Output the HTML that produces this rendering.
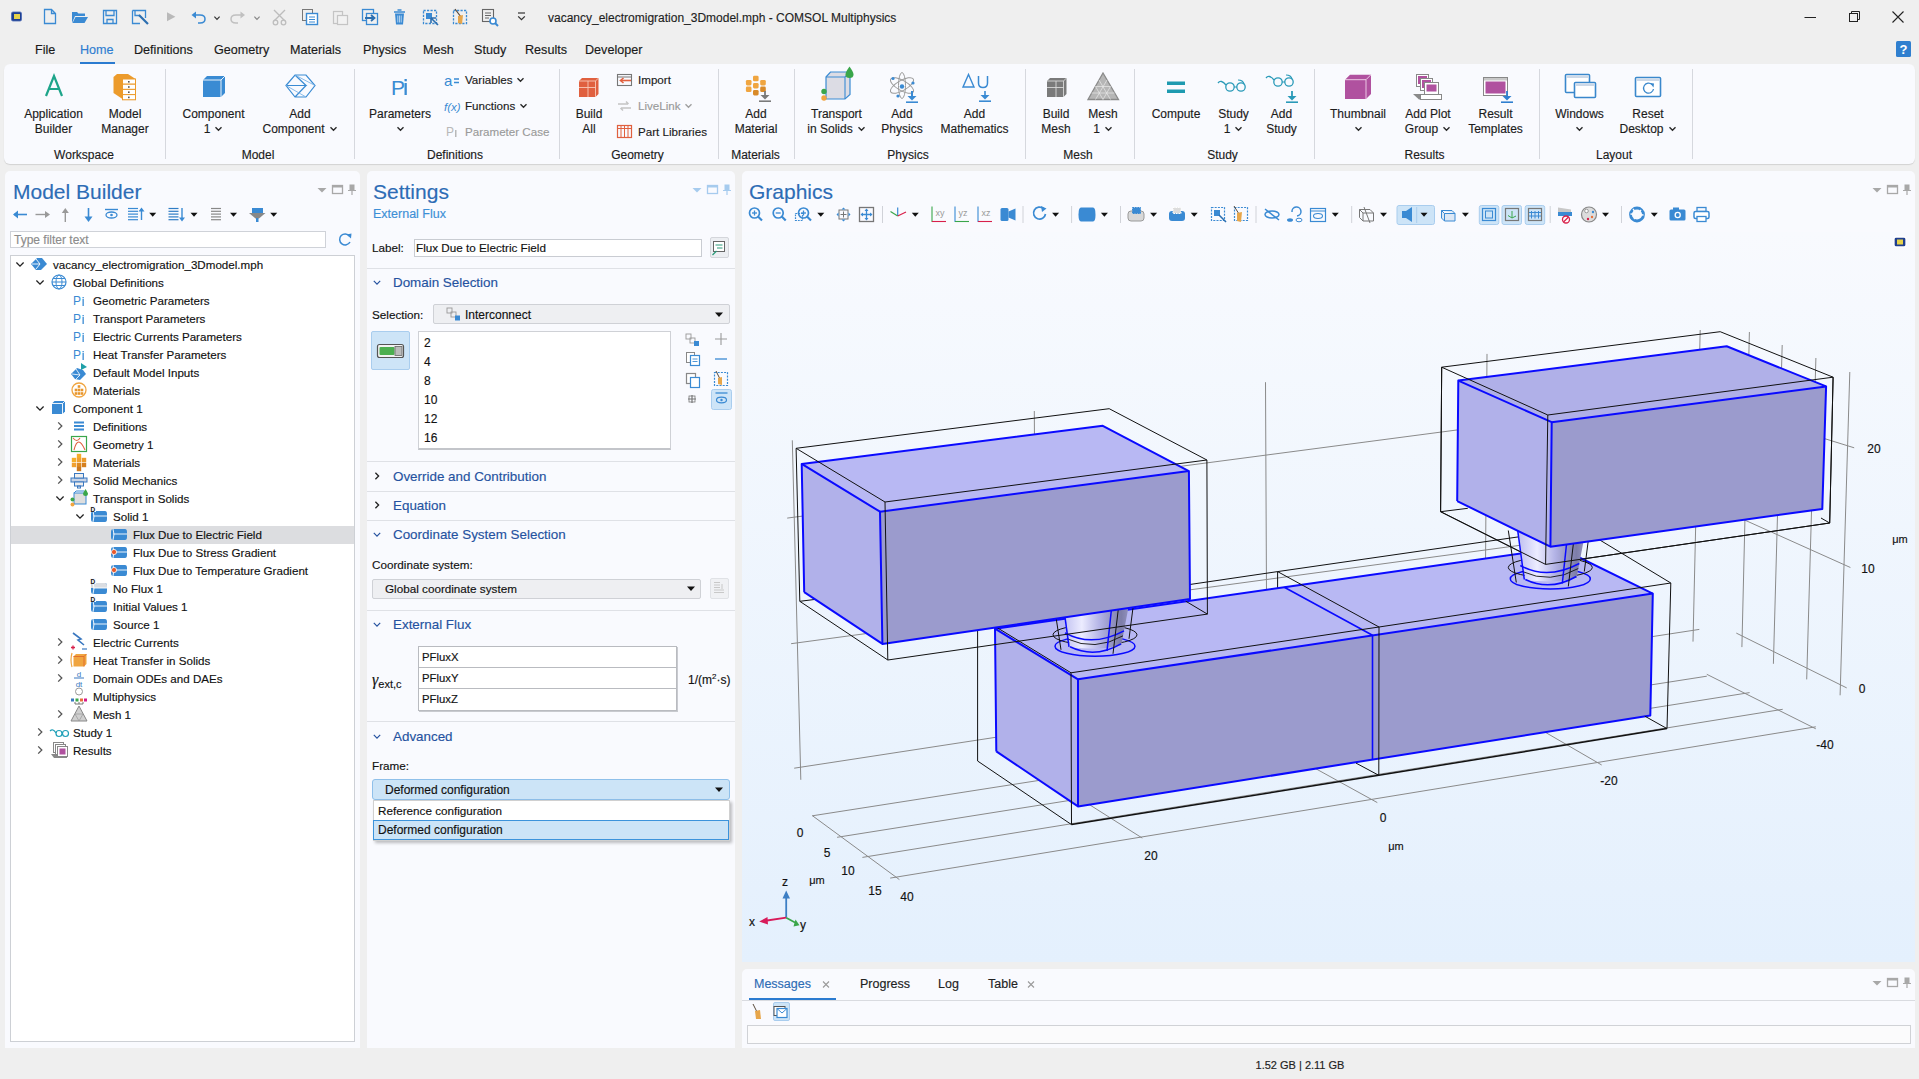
<!DOCTYPE html>
<html><head><meta charset="utf-8"><style>
html,body{margin:0;padding:0;}
body{width:1919px;height:1079px;overflow:hidden;background:#efefef;position:relative;font-family:"Liberation Sans",sans-serif;}
.t{position:absolute;white-space:nowrap;line-height:normal;-webkit-text-stroke:0.15px currentColor;}
svg{overflow:visible;}
</style></head><body>
<div style="position:absolute;left:4px;top:64px;width:1911px;height:100px;background:#f9fafe;border-radius:6px;box-shadow:0 1px 1px rgba(0,0,0,0.12);"></div>
<div style="position:absolute;left:5px;top:171px;width:355px;height:877px;background:#f9fafe;border-radius:5px 5px 0 0;"></div>
<div style="position:absolute;left:367px;top:171px;width:368px;height:877px;background:#f9fafe;border-radius:5px 5px 0 0;"></div>
<div style="position:absolute;left:742px;top:171px;width:1173px;height:791px;background:#f9fafe;border-radius:5px 5px 0 0;"></div>
<div style="position:absolute;left:742px;top:969px;width:1173px;height:79px;background:#f9fafe;border-radius:5px 5px 0 0;"></div>
<div class="t " style="left:548.0px;top:10.6px;font-size:12px;color:#1f1f1f;">vacancy_electromigration_3Dmodel.mph - COMSOL Multiphysics</div>
<div class="t " style="left:35.0px;top:42.6px;font-size:12.6px;color:#1a1a1a;">File</div>
<div class="t " style="left:80.0px;top:42.6px;font-size:12.6px;color:#2e7dd1;">Home</div>
<div class="t " style="left:134.0px;top:42.6px;font-size:12.6px;color:#1a1a1a;">Definitions</div>
<div class="t " style="left:214.0px;top:42.6px;font-size:12.6px;color:#1a1a1a;">Geometry</div>
<div class="t " style="left:290.0px;top:42.6px;font-size:12.6px;color:#1a1a1a;">Materials</div>
<div class="t " style="left:363.0px;top:42.6px;font-size:12.6px;color:#1a1a1a;">Physics</div>
<div class="t " style="left:423.0px;top:42.6px;font-size:12.6px;color:#1a1a1a;">Mesh</div>
<div class="t " style="left:474.0px;top:42.6px;font-size:12.6px;color:#1a1a1a;">Study</div>
<div class="t " style="left:525.0px;top:42.6px;font-size:12.6px;color:#1a1a1a;">Results</div>
<div class="t " style="left:585.0px;top:42.6px;font-size:12.6px;color:#1a1a1a;">Developer</div>
<div style="position:absolute;left:80px;top:62px;width:35px;height:2px;background:#2b7bd0;"></div>
<div class="t" style="left:-26.5px;top:106.6px;width:160px;text-align:center;font-size:12px;color:#1c1c1c;">Application</div>
<div class="t" style="left:-26.5px;top:121.6px;width:160px;text-align:center;font-size:12px;color:#1c1c1c;">Builder</div>
<div class="t" style="left:45.0px;top:106.6px;width:160px;text-align:center;font-size:12px;color:#1c1c1c;">Model</div>
<div class="t" style="left:45.0px;top:121.6px;width:160px;text-align:center;font-size:12px;color:#1c1c1c;">Manager</div>
<div class="t" style="left:133.5px;top:106.6px;width:160px;text-align:center;font-size:12px;color:#1c1c1c;">Component</div>
<div class="t" style="left:133.5px;top:121.6px;width:160px;text-align:center;font-size:12px;color:#1c1c1c;">1<svg width="9" height="6" style="margin-left:4px;vertical-align:1px;overflow:visible"><path d="M1.5 1.2 L4.5 4.2 L7.5 1.2" stroke="#2a2a2a" fill="none" stroke-width="1.4"/></svg></div>
<div class="t" style="left:220.0px;top:106.6px;width:160px;text-align:center;font-size:12px;color:#1c1c1c;">Add</div>
<div class="t" style="left:220.0px;top:121.6px;width:160px;text-align:center;font-size:12px;color:#1c1c1c;">Component<svg width="9" height="6" style="margin-left:4px;vertical-align:1px;overflow:visible"><path d="M1.5 1.2 L4.5 4.2 L7.5 1.2" stroke="#2a2a2a" fill="none" stroke-width="1.4"/></svg></div>
<div class="t" style="left:320.0px;top:106.6px;width:160px;text-align:center;font-size:12px;color:#1c1c1c;">Parameters</div>
<div class="t" style="left:320.0px;top:121.6px;width:160px;text-align:center;font-size:12px;color:#1c1c1c;"><svg width="9" height="6" style="margin-left:0;vertical-align:1px;overflow:visible"><path d="M1.5 1.2 L4.5 4.2 L7.5 1.2" stroke="#2a2a2a" fill="none" stroke-width="1.4"/></svg></div>
<div class="t" style="left:509.0px;top:106.6px;width:160px;text-align:center;font-size:12px;color:#1c1c1c;">Build</div>
<div class="t" style="left:509.0px;top:121.6px;width:160px;text-align:center;font-size:12px;color:#1c1c1c;">All</div>
<div class="t" style="left:676.0px;top:106.6px;width:160px;text-align:center;font-size:12px;color:#1c1c1c;">Add</div>
<div class="t" style="left:676.0px;top:121.6px;width:160px;text-align:center;font-size:12px;color:#1c1c1c;">Material</div>
<div class="t" style="left:756.5px;top:106.6px;width:160px;text-align:center;font-size:12px;color:#1c1c1c;">Transport</div>
<div class="t" style="left:756.5px;top:121.6px;width:160px;text-align:center;font-size:12px;color:#1c1c1c;">in Solids<svg width="9" height="6" style="margin-left:4px;vertical-align:1px;overflow:visible"><path d="M1.5 1.2 L4.5 4.2 L7.5 1.2" stroke="#2a2a2a" fill="none" stroke-width="1.4"/></svg></div>
<div class="t" style="left:822.0px;top:106.6px;width:160px;text-align:center;font-size:12px;color:#1c1c1c;">Add</div>
<div class="t" style="left:822.0px;top:121.6px;width:160px;text-align:center;font-size:12px;color:#1c1c1c;">Physics</div>
<div class="t" style="left:894.5px;top:106.6px;width:160px;text-align:center;font-size:12px;color:#1c1c1c;">Add</div>
<div class="t" style="left:894.5px;top:121.6px;width:160px;text-align:center;font-size:12px;color:#1c1c1c;">Mathematics</div>
<div class="t" style="left:976.0px;top:106.6px;width:160px;text-align:center;font-size:12px;color:#1c1c1c;">Build</div>
<div class="t" style="left:976.0px;top:121.6px;width:160px;text-align:center;font-size:12px;color:#1c1c1c;">Mesh</div>
<div class="t" style="left:1023.0px;top:106.6px;width:160px;text-align:center;font-size:12px;color:#1c1c1c;">Mesh</div>
<div class="t" style="left:1023.0px;top:121.6px;width:160px;text-align:center;font-size:12px;color:#1c1c1c;">1<svg width="9" height="6" style="margin-left:4px;vertical-align:1px;overflow:visible"><path d="M1.5 1.2 L4.5 4.2 L7.5 1.2" stroke="#2a2a2a" fill="none" stroke-width="1.4"/></svg></div>
<div class="t" style="left:1096.0px;top:106.6px;width:160px;text-align:center;font-size:12px;color:#1c1c1c;">Compute</div>
<div class="t" style="left:1153.5px;top:106.6px;width:160px;text-align:center;font-size:12px;color:#1c1c1c;">Study</div>
<div class="t" style="left:1153.5px;top:121.6px;width:160px;text-align:center;font-size:12px;color:#1c1c1c;">1<svg width="9" height="6" style="margin-left:4px;vertical-align:1px;overflow:visible"><path d="M1.5 1.2 L4.5 4.2 L7.5 1.2" stroke="#2a2a2a" fill="none" stroke-width="1.4"/></svg></div>
<div class="t" style="left:1201.5px;top:106.6px;width:160px;text-align:center;font-size:12px;color:#1c1c1c;">Add</div>
<div class="t" style="left:1201.5px;top:121.6px;width:160px;text-align:center;font-size:12px;color:#1c1c1c;">Study</div>
<div class="t" style="left:1278.0px;top:106.6px;width:160px;text-align:center;font-size:12px;color:#1c1c1c;">Thumbnail</div>
<div class="t" style="left:1278.0px;top:121.6px;width:160px;text-align:center;font-size:12px;color:#1c1c1c;"><svg width="9" height="6" style="margin-left:0;vertical-align:1px;overflow:visible"><path d="M1.5 1.2 L4.5 4.2 L7.5 1.2" stroke="#2a2a2a" fill="none" stroke-width="1.4"/></svg></div>
<div class="t" style="left:1348.0px;top:106.6px;width:160px;text-align:center;font-size:12px;color:#1c1c1c;">Add Plot</div>
<div class="t" style="left:1348.0px;top:121.6px;width:160px;text-align:center;font-size:12px;color:#1c1c1c;">Group<svg width="9" height="6" style="margin-left:4px;vertical-align:1px;overflow:visible"><path d="M1.5 1.2 L4.5 4.2 L7.5 1.2" stroke="#2a2a2a" fill="none" stroke-width="1.4"/></svg></div>
<div class="t" style="left:1415.5px;top:106.6px;width:160px;text-align:center;font-size:12px;color:#1c1c1c;">Result</div>
<div class="t" style="left:1415.5px;top:121.6px;width:160px;text-align:center;font-size:12px;color:#1c1c1c;">Templates</div>
<div class="t" style="left:1499.5px;top:106.6px;width:160px;text-align:center;font-size:12px;color:#1c1c1c;">Windows</div>
<div class="t" style="left:1499.5px;top:121.6px;width:160px;text-align:center;font-size:12px;color:#1c1c1c;"><svg width="9" height="6" style="margin-left:0;vertical-align:1px;overflow:visible"><path d="M1.5 1.2 L4.5 4.2 L7.5 1.2" stroke="#2a2a2a" fill="none" stroke-width="1.4"/></svg></div>
<div class="t" style="left:1568.0px;top:106.6px;width:160px;text-align:center;font-size:12px;color:#1c1c1c;">Reset</div>
<div class="t" style="left:1568.0px;top:121.6px;width:160px;text-align:center;font-size:12px;color:#1c1c1c;">Desktop<svg width="9" height="6" style="margin-left:4px;vertical-align:1px;overflow:visible"><path d="M1.5 1.2 L4.5 4.2 L7.5 1.2" stroke="#2a2a2a" fill="none" stroke-width="1.4"/></svg></div>
<div class="t" style="left:4.0px;top:147.6px;width:160px;text-align:center;font-size:12px;color:#1c1c1c;">Workspace</div>
<div class="t" style="left:178.0px;top:147.6px;width:160px;text-align:center;font-size:12px;color:#1c1c1c;">Model</div>
<div class="t" style="left:375.0px;top:147.6px;width:160px;text-align:center;font-size:12px;color:#1c1c1c;">Definitions</div>
<div class="t" style="left:557.5px;top:147.6px;width:160px;text-align:center;font-size:12px;color:#1c1c1c;">Geometry</div>
<div class="t" style="left:675.5px;top:147.6px;width:160px;text-align:center;font-size:12px;color:#1c1c1c;">Materials</div>
<div class="t" style="left:828.0px;top:147.6px;width:160px;text-align:center;font-size:12px;color:#1c1c1c;">Physics</div>
<div class="t" style="left:998.0px;top:147.6px;width:160px;text-align:center;font-size:12px;color:#1c1c1c;">Mesh</div>
<div class="t" style="left:1142.5px;top:147.6px;width:160px;text-align:center;font-size:12px;color:#1c1c1c;">Study</div>
<div class="t" style="left:1344.5px;top:147.6px;width:160px;text-align:center;font-size:12px;color:#1c1c1c;">Results</div>
<div class="t" style="left:1534.0px;top:147.6px;width:160px;text-align:center;font-size:12px;color:#1c1c1c;">Layout</div>
<div style="position:absolute;left:165px;top:69px;width:1px;height:90px;background:#d6d8de;"></div>
<div style="position:absolute;left:354px;top:69px;width:1px;height:90px;background:#d6d8de;"></div>
<div style="position:absolute;left:559px;top:69px;width:1px;height:90px;background:#d6d8de;"></div>
<div style="position:absolute;left:718px;top:69px;width:1px;height:90px;background:#d6d8de;"></div>
<div style="position:absolute;left:794px;top:69px;width:1px;height:90px;background:#d6d8de;"></div>
<div style="position:absolute;left:1025px;top:69px;width:1px;height:90px;background:#d6d8de;"></div>
<div style="position:absolute;left:1134px;top:69px;width:1px;height:90px;background:#d6d8de;"></div>
<div style="position:absolute;left:1314px;top:69px;width:1px;height:90px;background:#d6d8de;"></div>
<div style="position:absolute;left:1539px;top:69px;width:1px;height:90px;background:#d6d8de;"></div>
<div style="position:absolute;left:1692px;top:69px;width:1px;height:90px;background:#d6d8de;"></div>
<div class="t" style="left:465.0px;top:72.9px;font-size:11.6px;color:#1c1c1c;">Variables<svg width="9" height="6" style="margin-left:4px;vertical-align:1px;overflow:visible"><path d="M1.5 1.2 L4.5 4.2 L7.5 1.2" stroke="#2a2a2a" fill="none" stroke-width="1.4"/></svg></div>
<div class="t" style="left:465.0px;top:98.8px;font-size:11.6px;color:#1c1c1c;">Functions<svg width="9" height="6" style="margin-left:4px;vertical-align:1px;overflow:visible"><path d="M1.5 1.2 L4.5 4.2 L7.5 1.2" stroke="#2a2a2a" fill="none" stroke-width="1.4"/></svg></div>
<div class="t" style="left:465.0px;top:124.9px;font-size:11.6px;color:#9a9a9a;">Parameter Case</div>
<div class="t" style="left:638.0px;top:72.9px;font-size:11.6px;color:#1c1c1c;">Import</div>
<div class="t" style="left:638.0px;top:98.8px;font-size:11.6px;color:#9a9a9a;">LiveLink<svg width="9" height="6" style="margin-left:3px;vertical-align:1px;overflow:visible"><path d="M1.5 1.2 L4.5 4.2 L7.5 1.2" stroke="#a0a0a0" fill="none" stroke-width="1.4"/></svg></div>
<div class="t" style="left:638.0px;top:124.9px;font-size:11.6px;color:#1c1c1c;">Part Libraries</div>
<div class="t " style="left:13.0px;top:179.5px;font-size:21px;color:#2d6cb5;">Model Builder</div>
<div style="position:absolute;left:10px;top:231px;width:316px;height:17px;background:#fff;border:1px solid #cfd2d8;box-sizing:border-box;"></div>
<div class="t " style="left:14.0px;top:233.1px;font-size:12px;color:#8c8c8c;">Type filter text</div>
<div style="position:absolute;left:10px;top:255px;width:345px;height:787px;background:#fff;border:1px solid #cdd0d5;box-sizing:border-box;"></div>
<div style="position:absolute;left:11px;top:526px;width:343px;height:18px;background:#dcdde0;"></div>
<div class="t " style="left:53.0px;top:258.3px;font-size:11.6px;color:#111;">vacancy_electromigration_3Dmodel.mph</div>
<div class="t " style="left:73.0px;top:276.3px;font-size:11.6px;color:#111;">Global Definitions</div>
<div class="t " style="left:93.0px;top:294.3px;font-size:11.6px;color:#111;">Geometric Parameters</div>
<div class="t " style="left:93.0px;top:312.3px;font-size:11.6px;color:#111;">Transport Parameters</div>
<div class="t " style="left:93.0px;top:330.3px;font-size:11.6px;color:#111;">Electric Currents Parameters</div>
<div class="t " style="left:93.0px;top:348.3px;font-size:11.6px;color:#111;">Heat Transfer Parameters</div>
<div class="t " style="left:93.0px;top:366.3px;font-size:11.6px;color:#111;">Default Model Inputs</div>
<div class="t " style="left:93.0px;top:384.3px;font-size:11.6px;color:#111;">Materials</div>
<div class="t " style="left:73.0px;top:402.3px;font-size:11.6px;color:#111;">Component 1</div>
<div class="t " style="left:93.0px;top:420.3px;font-size:11.6px;color:#111;">Definitions</div>
<div class="t " style="left:93.0px;top:438.3px;font-size:11.6px;color:#111;">Geometry 1</div>
<div class="t " style="left:93.0px;top:456.3px;font-size:11.6px;color:#111;">Materials</div>
<div class="t " style="left:93.0px;top:474.3px;font-size:11.6px;color:#111;">Solid Mechanics</div>
<div class="t " style="left:93.0px;top:492.3px;font-size:11.6px;color:#111;">Transport in Solids</div>
<div class="t " style="left:113.0px;top:510.3px;font-size:11.6px;color:#111;">Solid 1</div>
<div class="t " style="left:133.0px;top:528.3px;font-size:11.6px;color:#111;">Flux Due to Electric Field</div>
<div class="t " style="left:133.0px;top:546.3px;font-size:11.6px;color:#111;">Flux Due to Stress Gradient</div>
<div class="t " style="left:133.0px;top:564.3px;font-size:11.6px;color:#111;">Flux Due to Temperature Gradient</div>
<div class="t " style="left:113.0px;top:582.3px;font-size:11.6px;color:#111;">No Flux 1</div>
<div class="t " style="left:113.0px;top:600.3px;font-size:11.6px;color:#111;">Initial Values 1</div>
<div class="t " style="left:113.0px;top:618.3px;font-size:11.6px;color:#111;">Source 1</div>
<div class="t " style="left:93.0px;top:636.3px;font-size:11.6px;color:#111;">Electric Currents</div>
<div class="t " style="left:93.0px;top:654.3px;font-size:11.6px;color:#111;">Heat Transfer in Solids</div>
<div class="t " style="left:93.0px;top:672.3px;font-size:11.6px;color:#111;">Domain ODEs and DAEs</div>
<div class="t " style="left:93.0px;top:690.3px;font-size:11.6px;color:#111;">Multiphysics</div>
<div class="t " style="left:93.0px;top:708.3px;font-size:11.6px;color:#111;">Mesh 1</div>
<div class="t " style="left:73.0px;top:726.3px;font-size:11.6px;color:#111;">Study 1</div>
<div class="t " style="left:73.0px;top:744.3px;font-size:11.6px;color:#111;">Results</div>
<div class="t " style="left:373.0px;top:179.5px;font-size:21px;color:#2d6cb5;">Settings</div>
<div class="t " style="left:373.0px;top:207.2px;font-size:12.5px;color:#3d8fd6;">External Flux</div>
<div class="t " style="left:372.0px;top:240.9px;font-size:11.7px;color:#111;">Label:</div>
<div style="position:absolute;left:414px;top:239px;width:288px;height:18px;background:#fff;border:1px solid #c9ccd2;box-sizing:border-box;"></div>
<div class="t " style="left:416.0px;top:240.9px;font-size:11.7px;color:#111;">Flux Due to Electric Field</div>
<div style="position:absolute;left:710px;top:237px;width:19px;height:21px;background:#eceef2;border:1px solid #d4d6db;border-radius:2px;box-sizing:border-box;"></div>
<div style="position:absolute;left:367px;top:268px;width:368px;height:1px;background:#dfe1e6;"></div>
<div class="t " style="left:393.0px;top:274.6px;font-size:13.4px;color:#2552a0;">Domain Selection</div>
<div class="t " style="left:372.0px;top:307.9px;font-size:11.7px;color:#111;">Selection:</div>
<div style="position:absolute;left:433px;top:304px;width:297px;height:20px;background:#eeeff2;border:1px solid #cfd1d6;border-radius:2px;box-sizing:border-box;"></div>
<div class="t " style="left:465.0px;top:307.6px;font-size:12px;color:#111;">Interconnect</div>
<div style="position:absolute;left:371px;top:331px;width:39px;height:39px;background:#cde4f7;border:1px solid #a9cdee;border-radius:2px;box-sizing:border-box;"></div>
<div style="position:absolute;left:418px;top:331px;width:253px;height:119px;background:#fff;border:1px solid #cfd1d6;border-bottom:2px solid #c3c5ca;box-sizing:border-box;"></div>
<div class="t " style="left:424.0px;top:335.6px;font-size:12px;color:#111;">2</div>
<div class="t " style="left:424.0px;top:354.6px;font-size:12px;color:#111;">4</div>
<div class="t " style="left:424.0px;top:373.6px;font-size:12px;color:#111;">8</div>
<div class="t " style="left:424.0px;top:392.6px;font-size:12px;color:#111;">10</div>
<div class="t " style="left:424.0px;top:411.6px;font-size:12px;color:#111;">12</div>
<div class="t " style="left:424.0px;top:430.6px;font-size:12px;color:#111;">16</div>
<div style="position:absolute;left:367px;top:461px;width:368px;height:1px;background:#dfe1e6;"></div>
<div style="position:absolute;left:367px;top:491px;width:368px;height:1px;background:#dfe1e6;"></div>
<div style="position:absolute;left:367px;top:520px;width:368px;height:1px;background:#dfe1e6;"></div>
<div style="position:absolute;left:367px;top:610px;width:368px;height:1px;background:#dfe1e6;"></div>
<div style="position:absolute;left:367px;top:721px;width:368px;height:1px;background:#dfe1e6;"></div>
<div class="t " style="left:393.0px;top:468.6px;font-size:13.4px;color:#2552a0;">Override and Contribution</div>
<div class="t " style="left:393.0px;top:497.6px;font-size:13.4px;color:#2552a0;">Equation</div>
<div class="t " style="left:393.0px;top:526.6px;font-size:13.4px;color:#2552a0;">Coordinate System Selection</div>
<div class="t " style="left:372.0px;top:557.9px;font-size:11.7px;color:#111;">Coordinate system:</div>
<div style="position:absolute;left:372px;top:579px;width:329px;height:20px;background:#eeeff2;border:1px solid #cfd1d6;border-radius:2px;box-sizing:border-box;"></div>
<div class="t " style="left:385.0px;top:581.9px;font-size:11.7px;color:#111;">Global coordinate system</div>
<div style="position:absolute;left:710px;top:578px;width:19px;height:21px;background:#f0f1f4;border:1px solid #e0e2e6;border-radius:2px;box-sizing:border-box;"></div>
<div class="t " style="left:393.0px;top:616.6px;font-size:13.4px;color:#2552a0;">External Flux</div>
<div style="position:absolute;left:418px;top:646px;width:259px;height:65px;background:#fff;border:1px solid #b9bbc0;box-sizing:border-box;box-shadow:1px 1px 0 #c8cacf;"></div>
<div style="position:absolute;left:419px;top:667px;width:257px;height:1px;background:#b9bbc0;"></div>
<div style="position:absolute;left:419px;top:688px;width:257px;height:1px;background:#b9bbc0;"></div>
<div class="t " style="left:422.0px;top:651.3px;font-size:11.3px;color:#111;">PFluxX</div>
<div class="t " style="left:422.0px;top:672.3px;font-size:11.3px;color:#111;">PFluxY</div>
<div class="t " style="left:422.0px;top:693.3px;font-size:11.3px;color:#111;">PFluxZ</div>
<div class="t" style="left:372.0px;top:671.1px;font-size:12px;color:#111;"><i style="font-family:'Liberation Serif',serif;font-size:16px">γ</i><span style="font-size:11px;vertical-align:-3px">ext,c</span></div>
<div class="t" style="left:688.0px;top:671.6px;font-size:12px;color:#111;">1/(m<sup style="font-size:8px;vertical-align:5px">2</sup>·s)</div>
<div class="t " style="left:393.0px;top:728.6px;font-size:13.4px;color:#2552a0;">Advanced</div>
<div class="t " style="left:372.0px;top:758.9px;font-size:11.7px;color:#111;">Frame:</div>
<div style="position:absolute;left:372px;top:779px;width:358px;height:21px;background:#cce4f7;border:1px solid #8fc0ea;border-radius:3px;box-sizing:border-box;"></div>
<div class="t " style="left:385.0px;top:782.6px;font-size:12px;color:#111;">Deformed configuration</div>
<div style="position:absolute;left:373px;top:800px;width:357px;height:41px;background:#fff;border:1px solid #d0d0d0;box-sizing:border-box;box-shadow:2px 2px 3px rgba(0,0,0,0.25);"></div>
<div class="t " style="left:378.0px;top:803.9px;font-size:11.7px;color:#111;">Reference configuration</div>
<div style="position:absolute;left:373px;top:820px;width:356px;height:20px;background:#cce4f7;border:1px solid #3c93db;box-sizing:border-box;"></div>
<div class="t " style="left:378.0px;top:822.6px;font-size:12px;color:#111;">Deformed configuration</div>
<svg style="position:absolute;left:742px;top:172px;" width="1173" height="790" viewBox="742 172 1173 790"><defs><linearGradient id="gbg" x1="0" y1="0" x2="0" y2="1"><stop offset="0" stop-color="#f8fafe"/><stop offset="1" stop-color="#e4f0fd"/></linearGradient><linearGradient id="via" x1="0" y1="0" x2="1" y2="0"><stop offset="0" stop-color="#b9b9ee"/><stop offset="0.3" stop-color="#ececff"/><stop offset="0.55" stop-color="#b3b3e6"/><stop offset="0.85" stop-color="#7d7da8"/><stop offset="1" stop-color="#9a9ac8"/></linearGradient></defs>
<rect x="742" y="232" width="1173" height="730" fill="url(#gbg)"/>
<line x1="812.3" y1="815.8" x2="1706.8" y2="676.2" stroke="#8a8a8a" stroke-width="1"/>
<line x1="837.1" y1="837.3" x2="1749.6" y2="692.6" stroke="#8a8a8a" stroke-width="1"/>
<line x1="862.4" y1="857.4" x2="1782.7" y2="709.3" stroke="#8a8a8a" stroke-width="1"/>
<line x1="890.2" y1="878.1" x2="1815.8" y2="726.8" stroke="#8a8a8a" stroke-width="1"/>
<line x1="812.3" y1="815.6" x2="899.4" y2="879.6" stroke="#8a8a8a" stroke-width="1"/>
<line x1="1706.8" y1="674.3" x2="1815.8" y2="728.8" stroke="#8a8a8a" stroke-width="1"/>
<line x1="1048.4" y1="778.7" x2="1142.3" y2="838.1" stroke="#8a8a8a" stroke-width="1"/>
<line x1="1300.0" y1="760.0" x2="1377.3" y2="802.6" stroke="#8a8a8a" stroke-width="1"/>
<line x1="1500.0" y1="706.0" x2="1601.7" y2="765.0" stroke="#8a8a8a" stroke-width="1"/>
<line x1="792.3" y1="440.3" x2="800.8" y2="779.8" stroke="#8a8a8a" stroke-width="1"/>
<line x1="1034.3" y1="411.0" x2="1036.0" y2="700.0" stroke="#8a8a8a" stroke-width="1"/>
<line x1="1265.5" y1="382.2" x2="1267.0" y2="700.0" stroke="#8a8a8a" stroke-width="1"/>
<line x1="1487.0" y1="353.9" x2="1485.0" y2="640.0" stroke="#8a8a8a" stroke-width="1"/>
<line x1="1700.2" y1="330.0" x2="1693.0" y2="641.6" stroke="#8a8a8a" stroke-width="1"/>
<line x1="787.2" y1="518.1" x2="1700.0" y2="398.0" stroke="#8a8a8a" stroke-width="1"/>
<line x1="791.1" y1="643.7" x2="1700.0" y2="521.0" stroke="#8a8a8a" stroke-width="1"/>
<line x1="794.2" y1="768.2" x2="1699.3" y2="629.4" stroke="#8a8a8a" stroke-width="1"/>
<line x1="1749.4" y1="332.0" x2="1741.9" y2="647.1" stroke="#8a8a8a" stroke-width="1"/>
<line x1="1782.2" y1="345.0" x2="1773.4" y2="663.8" stroke="#8a8a8a" stroke-width="1"/>
<line x1="1815.9" y1="358.0" x2="1806.7" y2="679.4" stroke="#8a8a8a" stroke-width="1"/>
<line x1="1849.8" y1="372.0" x2="1840.1" y2="695.3" stroke="#8a8a8a" stroke-width="1"/>
<line x1="1700.0" y1="400.0" x2="1854.2" y2="447.8" stroke="#8a8a8a" stroke-width="1"/>
<line x1="1700.0" y1="500.0" x2="1850.4" y2="567.5" stroke="#8a8a8a" stroke-width="1"/>
<line x1="1736.3" y1="633.1" x2="1846.7" y2="687.9" stroke="#8a8a8a" stroke-width="1"/>
<polyline points="1441.7,367.2 1720.2,331.7 1833.1,377.2" fill="none" stroke="#111" stroke-width="1" stroke-linejoin="round" />
<polyline points="1441.7,367.2 1440.6,511.7 1545.6,564.4 1829.7,523.0 1833.1,377.2" fill="none" stroke="#111" stroke-width="1" stroke-linejoin="round" />
<line x1="1440.6" y1="511.7" x2="1467.8" y2="508.3" stroke="#111" stroke-width="1"/>
<polyline points="977.6,615.7 1277.6,571.6 1580.0,528.0" fill="none" stroke="#111" stroke-width="1" stroke-linejoin="round" />
<line x1="977.6" y1="615.7" x2="977.6" y2="761.0" stroke="#111" stroke-width="1"/>
<line x1="1277.6" y1="571.6" x2="1277.6" y2="590.0" stroke="#111" stroke-width="1"/>
<polygon points="995.0,628.7 1284.3,587.2 1560.0,548.0 1652.8,593.6 1372.5,635.2 1078.0,679.3" fill="#b8b8f3" />
<polygon points="995.0,628.7 1078.0,679.3 1078.0,806.4 996.3,751.4" fill="#b1b1ea" />
<polygon points="1078.0,679.3 1652.8,593.6 1650.3,715.4 1078.0,806.4" fill="#9b9bcd" />
<polyline points="996.3,751.4 995.0,628.7 1284.3,587.2 1560.0,548.0" fill="none" stroke="#0a0aff" stroke-width="2" stroke-linejoin="round" />
<polyline points="1560.0,548.0 1652.8,593.6 1650.3,715.4 1078.0,806.4 996.3,751.4" fill="none" stroke="#0a0aff" stroke-width="2" stroke-linejoin="round" />
<polyline points="995.0,628.7 1078.0,679.3 1078.0,806.4" fill="none" stroke="#0a0aff" stroke-width="2" stroke-linejoin="round" />
<polyline points="1078.0,679.3 1652.8,593.6" fill="none" stroke="#0a0aff" stroke-width="2" stroke-linejoin="round" />
<polyline points="1284.3,587.2 1372.5,635.2 1372.5,759.2" fill="none" stroke="#0a0aff" stroke-width="1.6" stroke-linejoin="round" />
<polyline points="977.6,761.0 1071.5,824.6" fill="none" stroke="#111" stroke-width="1" stroke-linejoin="round" />
<polyline points="1071.5,824.6 1378.8,775.3 1667.0,728.6" fill="none" stroke="#111" stroke-width="1.5" stroke-linejoin="round" />
<polyline points="1667.0,728.6 1670.8,583.0" fill="none" stroke="#111" stroke-width="1" stroke-linejoin="round" />
<polyline points="1071.0,672.8 1379.0,627.0 1670.8,583.0" fill="none" stroke="#111" stroke-width="1" stroke-linejoin="round" />
<polyline points="977.6,615.7 1071.0,672.8 1071.5,824.6" fill="none" stroke="#111" stroke-width="1" stroke-linejoin="round" />
<polyline points="1277.6,571.6 1379.0,627.0 1378.8,775.3" fill="none" stroke="#111" stroke-width="1" stroke-linejoin="round" />
<polyline points="1580.0,528.0 1670.8,583.0" fill="none" stroke="#111" stroke-width="1" stroke-linejoin="round" />
<line x1="1356.0" y1="763.1" x2="1378.8" y2="775.3" stroke="#111" stroke-width="1"/>
<line x1="1644.9" y1="716.2" x2="1667.0" y2="728.6" stroke="#111" stroke-width="1"/>
<ellipse cx="1095" cy="646.1999999999999" rx="40" ry="10" fill="none" stroke="#0a0aff" stroke-width="1.5"/>
<ellipse cx="1095" cy="634.8" rx="42" ry="10" fill="none" stroke="#111" stroke-width="1"/>
<line x1="1053.0" y1="597.8" x2="1061.0" y2="649.8" stroke="#111" stroke-width="1"/>
<polygon points="1060.4,589.8 1131.8,589.8 1121.3,645.0 1108.0,647.8 1095.0,648.8 1082.0,648.3 1070.1,648.0" fill="url(#via)" />
<path d="M1070 646.8 Q1095 658.8 1121 643.8" fill="none" stroke="#0a0aff" stroke-width="1.5"/>
<path d="M1065 632.8 Q1092 647.8 1124 630.8" fill="none" stroke="#0a0aff" stroke-width="1.5"/>
<path d="M1067 638.8 Q1095 651.8 1123 635.8" fill="none" stroke="#111" stroke-width="0.9"/>
<line x1="1134.0" y1="599.8" x2="1129.0" y2="638.8" stroke="#111" stroke-width="1"/>
<line x1="1120.0" y1="594.8" x2="1113.0" y2="653.8" stroke="#111" stroke-width="1"/>
<line x1="1113.0" y1="594.8" x2="1107.0" y2="650.8" stroke="#0a0aff" stroke-width="1.5"/>
<line x1="1062.0" y1="594.8" x2="1069.0" y2="646.8" stroke="#0a0aff" stroke-width="1.5"/>
<ellipse cx="1550.3" cy="578.9" rx="40" ry="10" fill="none" stroke="#0a0aff" stroke-width="1.5"/>
<ellipse cx="1550.3" cy="567.5" rx="42" ry="10" fill="none" stroke="#111" stroke-width="1"/>
<line x1="1508.3" y1="530.5" x2="1516.3" y2="582.5" stroke="#111" stroke-width="1"/>
<polygon points="1515.7,522.5 1587.1,522.5 1576.6,577.7 1563.3,580.5 1550.3,581.5 1537.3,581.0 1525.4,580.7" fill="url(#via)" />
<path d="M1525.3 579.5 Q1550.3 591.5 1576.3 576.5" fill="none" stroke="#0a0aff" stroke-width="1.5"/>
<path d="M1520.3 565.5 Q1547.3 580.5 1579.3 563.5" fill="none" stroke="#0a0aff" stroke-width="1.5"/>
<path d="M1522.3 571.5 Q1550.3 584.5 1578.3 568.5" fill="none" stroke="#111" stroke-width="0.9"/>
<line x1="1589.3" y1="532.5" x2="1584.3" y2="571.5" stroke="#111" stroke-width="1"/>
<line x1="1575.3" y1="527.5" x2="1568.3" y2="586.5" stroke="#111" stroke-width="1"/>
<line x1="1568.3" y1="527.5" x2="1562.3" y2="583.5" stroke="#0a0aff" stroke-width="1.5"/>
<line x1="1517.3" y1="527.5" x2="1524.3" y2="579.5" stroke="#0a0aff" stroke-width="1.5"/>
<polygon points="1458.3,380.6 1726.7,346.3 1826.1,386.4 1551.7,422.2" fill="#b0b0e8" />
<polygon points="1458.3,380.6 1551.7,422.2 1550.4,546.7 1457.2,501.1" fill="#b1b1ea" />
<polygon points="1551.7,422.2 1826.1,386.4 1822.3,508.9 1550.4,546.7" fill="#9b9bcd" />
<polyline points="1457.2,501.1 1458.3,380.6 1726.7,346.3 1826.1,386.4 1822.3,508.9 1550.4,546.7 1457.2,501.1" fill="none" stroke="#0a0aff" stroke-width="2" stroke-linejoin="round" />
<polyline points="1458.3,380.6 1551.7,422.2 1550.4,546.7" fill="none" stroke="#0a0aff" stroke-width="2" stroke-linejoin="round" />
<polyline points="1551.7,422.2 1826.1,386.4" fill="none" stroke="#0a0aff" stroke-width="2" stroke-linejoin="round" />
<polyline points="1441.7,367.2 1547.8,415.0 1833.1,377.2" fill="none" stroke="#111" stroke-width="1" stroke-linejoin="round" />
<line x1="1547.8" y1="415.0" x2="1545.6" y2="564.4" stroke="#111" stroke-width="1"/>
<line x1="1829.7" y1="523.0" x2="1821.0" y2="518.0" stroke="#111" stroke-width="1"/>
<polyline points="1441.7,367.2 1440.6,511.7 1545.6,564.4 1829.7,523.0 1833.1,377.2" fill="none" stroke="#111" stroke-width="1" stroke-linejoin="round" />
<polyline points="796.1,448.3 1109.2,408.7 1206.9,460.0" fill="none" stroke="#111" stroke-width="1" stroke-linejoin="round" />
<line x1="1207.4" y1="614.1" x2="1185.6" y2="601.1" stroke="#111" stroke-width="1"/>
<line x1="799.8" y1="601.3" x2="816.0" y2="599.3" stroke="#111" stroke-width="1"/>
<polygon points="801.7,463.9 1102.8,425.8 1188.9,471.1 880.0,511.7" fill="#b8b8f3" />
<polygon points="801.7,463.9 880.0,511.7 882.4,643.9 804.2,592.2" fill="#b1b1ea" />
<polygon points="880.0,511.7 1188.9,471.1 1190.0,599.1 882.4,643.9" fill="#9b9bcd" />
<polyline points="804.2,592.2 801.7,463.9 1102.8,425.8 1188.9,471.1 1190.0,599.1 882.4,643.9 804.2,592.2" fill="none" stroke="#0a0aff" stroke-width="2" stroke-linejoin="round" />
<polyline points="801.7,463.9 880.0,511.7 882.4,643.9" fill="none" stroke="#0a0aff" stroke-width="2" stroke-linejoin="round" />
<polyline points="880.0,511.7 1188.9,471.1" fill="none" stroke="#0a0aff" stroke-width="2" stroke-linejoin="round" />
<polyline points="796.1,448.3 885.0,502.0 1206.9,460.0" fill="none" stroke="#111" stroke-width="1" stroke-linejoin="round" />
<polyline points="796.1,448.3 799.8,601.3 887.8,660.0 1207.4,614.1 1206.9,460.0" fill="none" stroke="#111" stroke-width="1" stroke-linejoin="round" />
<line x1="885.0" y1="502.0" x2="887.8" y2="660.0" stroke="#111" stroke-width="1"/></svg>
<div class="t " style="left:749.0px;top:179.5px;font-size:21px;color:#2d6cb5;">Graphics</div>
<div class="t" style="left:780.0px;top:826.1px;width:40px;text-align:center;font-size:12px;color:#111;">0</div>
<div class="t" style="left:807.0px;top:846.1px;width:40px;text-align:center;font-size:12px;color:#111;">5</div>
<div class="t" style="left:828.0px;top:864.1px;width:40px;text-align:center;font-size:12px;color:#111;">10</div>
<div class="t" style="left:855.0px;top:884.1px;width:40px;text-align:center;font-size:12px;color:#111;">15</div>
<div class="t" style="left:887.0px;top:890.1px;width:40px;text-align:center;font-size:12px;color:#111;">40</div>
<div class="t" style="left:1131.0px;top:849.1px;width:40px;text-align:center;font-size:12px;color:#111;">20</div>
<div class="t" style="left:1363.0px;top:811.1px;width:40px;text-align:center;font-size:12px;color:#111;">0</div>
<div class="t" style="left:1589.0px;top:774.1px;width:40px;text-align:center;font-size:12px;color:#111;">-20</div>
<div class="t" style="left:1805.0px;top:738.1px;width:40px;text-align:center;font-size:12px;color:#111;">-40</div>
<div class="t" style="left:1842.0px;top:682.1px;width:40px;text-align:center;font-size:12px;color:#111;">0</div>
<div class="t" style="left:1848.0px;top:562.1px;width:40px;text-align:center;font-size:12px;color:#111;">10</div>
<div class="t" style="left:1854.0px;top:442.1px;width:40px;text-align:center;font-size:12px;color:#111;">20</div>
<div class="t" style="left:797.0px;top:874.0px;width:40px;text-align:center;font-size:11px;color:#111;">μm</div>
<div class="t" style="left:1376.0px;top:840.0px;width:40px;text-align:center;font-size:11px;color:#111;">μm</div>
<div class="t" style="left:1880.0px;top:533.0px;width:40px;text-align:center;font-size:11px;color:#111;">μm</div>
<div class="t" style="left:775.0px;top:874.6px;width:20px;text-align:center;font-size:12px;color:#111;">z</div>
<div class="t" style="left:742.0px;top:914.6px;width:20px;text-align:center;font-size:12px;color:#111;">x</div>
<div class="t" style="left:793.0px;top:918.1px;width:20px;text-align:center;font-size:12px;color:#111;">y</div>
<div class="t " style="left:754.0px;top:977.2px;font-size:12.5px;color:#2d6cb5;">Messages</div>
<div style="position:absolute;left:749px;top:998px;width:87px;height:2px;background:#2b7bd0;"></div>
<div class="t " style="left:860.0px;top:977.2px;font-size:12.5px;color:#222;">Progress</div>
<div class="t " style="left:938.0px;top:977.2px;font-size:12.5px;color:#222;">Log</div>
<div class="t " style="left:988.0px;top:977.2px;font-size:12.5px;color:#222;">Table</div>
<div style="position:absolute;left:742px;top:1000px;width:1173px;height:1px;background:#d9dbe0;"></div>
<div style="position:absolute;left:747px;top:1025px;width:1164px;height:19px;background:#fbfbfc;border:1px solid #d0d2d6;box-sizing:border-box;"></div>
<div style="position:absolute;left:773px;top:1002px;width:17px;height:19px;background:#cde4f7;border:1px solid #a9cdee;border-radius:2px;box-sizing:border-box;"></div>
<div class="t" style="left:1200.0px;top:1058.5px;width:200px;text-align:center;font-size:11px;color:#222;">1.52 GB | 2.11 GB</div>
<svg style="position:absolute;left:0;top:0" width="1919" height="1079" viewBox="0 0 1919 1079"><rect x="11.5" y="12" width="10" height="9" fill="#1f3f8f" stroke="#4a6ab8" stroke-width="0.8" rx="1.5" /><rect x="14" y="14" width="6" height="5" fill="#e6d24a" stroke="none" stroke-width="1" rx="0" /><path d="M44.5 9.5 L51.5 9.5 L55.5 13.5 L55.5 23.5 L44.5 23.5 Z M51.5 9.5 L51.5 13.5 L55.5 13.5" fill="none" stroke="#3a8ad3" stroke-width="1.3" /><path d="M72 12 L77 12 L78.5 13.5 L85 13.5 L85 16 L75 16 L72 23 Z" fill="#3a8ad3" stroke="none" stroke-width="1" /><path d="M75.5 17 L88 17 L84.5 23 L72.5 23 Z" fill="#3a8ad3" stroke="none" stroke-width="1" /><path d="M103.5 10.5 L116.5 10.5 L116.5 23.5 L103.5 23.5 Z M106 10.5 L106 15.5 L114 15.5 L114 10.5 M107 23.5 L107 19.5 L113 19.5 L113 23.5" fill="none" stroke="#3a8ad3" stroke-width="1.3" /><path d="M132.5 10.5 L145.5 10.5 L145.5 18 M132.5 10.5 L132.5 23.5 L140 23.5 M135 10.5 L135 15.5 L140 15.5" fill="none" stroke="#3a8ad3" stroke-width="1.3" /><path d="M139 15 L148 24" fill="none" stroke="#2c6fb0" stroke-width="2.2" /><path d="M167 12.2 L175.4 16.7 L167 21.2 Z" fill="#b9b9b9" stroke="none" stroke-width="1" /><path d="M193 15 L200 15 Q205 15 205 19 Q205 23 200 23 L198 23" fill="none" stroke="#3a8ad3" stroke-width="1.5" /><path d="M191.5 15 L196 11.5 L196 18.5 Z" fill="#3a8ad3" stroke="none" stroke-width="1" /><path d="M214.4 16.7 L217 19.3 L219.6 16.7" fill="none" stroke="#333" stroke-width="1.2"/><path d="M243 15 L236 15 Q231 15 231 19 Q231 23 236 23 L238 23" fill="none" stroke="#c0c0c0" stroke-width="1.5" /><path d="M245 15 L240.5 11.5 L240.5 18.5 Z" fill="#c0c0c0" stroke="none" stroke-width="1" /><path d="M254.4 16.7 L257 19.3 L259.6 16.7" fill="none" stroke="#888" stroke-width="1.2"/><path d="M274 10 L285 21 M285 10 L274 21" fill="none" stroke="#bdbdbd" stroke-width="1.4" /><circle cx="275.5" cy="22.5" r="2.3" fill="none" stroke="#bdbdbd" stroke-width="1.3"/><circle cx="283.5" cy="22.5" r="2.3" fill="none" stroke="#bdbdbd" stroke-width="1.3"/><rect x="302.5" y="9.5" width="10" height="11" fill="none" stroke="#777" stroke-width="1" rx="0" /><rect x="306.5" y="13.5" width="11" height="11" fill="#fff" stroke="#3a8ad3" stroke-width="1.4" rx="0" /><path d="M309 17 L315 17 M309 19.5 L315 19.5 M309 22 L315 22" fill="none" stroke="#3a8ad3" stroke-width="1" /><rect x="333.5" y="11.5" width="9" height="12" fill="none" stroke="#c4c4c4" stroke-width="1.2" rx="0" /><rect x="337.5" y="15.5" width="10" height="9" fill="#f2f2f2" stroke="#c4c4c4" stroke-width="1.2" rx="0" /><rect x="362.5" y="9.5" width="11" height="11" fill="none" stroke="#3a8ad3" stroke-width="1.3" rx="0" /><rect x="366.5" y="13.5" width="11" height="11" fill="#f0f0f0" stroke="#3a8ad3" stroke-width="1.3" rx="0" /><path d="M365 18 L374 18 M371 15 L374.5 18 L371 21" fill="none" stroke="#2c6fb0" stroke-width="1.8" /><path d="M394 12 L405 12 M397.5 10 L401.5 10" fill="none" stroke="#3a8ad3" stroke-width="1.6" /><path d="M395 13.5 L404 13.5 L403 24.5 L396 24.5 Z" fill="#3a8ad3" stroke="none" stroke-width="1" /><path d="M397.8 15.5 L397.8 22.5 M399.5 15.5 L399.5 22.5 M401.2 15.5 L401.2 22.5" fill="none" stroke="#cfe3f5" stroke-width="0.8" /><rect x="423.5" y="10.5" width="13" height="13" fill="none" stroke="#3a8ad3" stroke-width="1.3" rx="0" stroke-dasharray="2.2 1.3"/><rect x="426" y="13" width="6" height="6" fill="#3a8ad3" stroke="none" stroke-width="1" rx="0" /><path d="M431 18 L438 25 M431 18 L431 23 M431 18 L436 18" fill="none" stroke="#2c6fb0" stroke-width="1.6" /><rect x="453.5" y="10.5" width="13" height="13" fill="none" stroke="#3a8ad3" stroke-width="1.3" rx="0" stroke-dasharray="2.2 1.3"/><path d="M455 9 L461 17" fill="none" stroke="#5a4a3a" stroke-width="1.2" /><path d="M458 16 L463 15 L462 24 L458 23 Z" fill="#e7a64a" stroke="none" stroke-width="1" /><rect x="482.5" y="9.5" width="11" height="12" fill="none" stroke="#666" stroke-width="1.1" rx="0" /><path d="M485 13 L491 13 M485 15.5 L491 15.5 M485 18 L489 18" fill="none" stroke="#666" stroke-width="1" /><circle cx="493" cy="21" r="3" fill="#fff" stroke="#3a8ad3" stroke-width="1.6"/><path d="M495 23 L498 26" fill="none" stroke="#3a8ad3" stroke-width="2" /><path d="M518 13 L525 13" fill="none" stroke="#333" stroke-width="1.2" /><path d="M518.2 16.35 L521.5 19.65 L524.8 16.35" fill="none" stroke="#333" stroke-width="1.3"/><path d="M1804.5 17.5 L1816 17.5" fill="none" stroke="#222" stroke-width="1" /><rect x="1849.5" y="13.5" width="8" height="8" fill="none" stroke="#222" stroke-width="1" rx="0" /><path d="M1851.5 13.5 L1851.5 11.5 L1859.5 11.5 L1859.5 19.5 L1857.5 19.5" fill="none" stroke="#222" stroke-width="1" /><path d="M1892.5 11.5 L1903.5 22.5 M1903.5 11.5 L1892.5 22.5" fill="none" stroke="#222" stroke-width="1.1" /><rect x="1896" y="41" width="15" height="16" fill="#2f7fcf" stroke="none" stroke-width="0" rx="1.5" /><text x="1903.5" y="54" font-size="13" fill="#fff" text-anchor="middle" font-family="Liberation Sans" font-weight="bold">?</text><path d="M46 96 L54 76 L62 96 M49 89 L59 89" fill="none" stroke="#1ea58a" stroke-width="2.2" /><path d="M113.5 77 L117 74 L128 74 L135.5 79 L135.5 100 L124 100 L113.5 93 Z" fill="#ec9b2c" stroke="none" stroke-width="1" /><rect x="122.5" y="79.0" width="13" height="5.2" fill="#fff" stroke="#ec9b2c" stroke-width="1" rx="0" /><rect x="128" y="81.0" width="1.6" height="1.6" fill="#555" stroke="none" stroke-width="1" rx="0" /><rect x="122.5" y="84.2" width="13" height="5.2" fill="#fff" stroke="#ec9b2c" stroke-width="1" rx="0" /><rect x="128" y="86.2" width="1.6" height="1.6" fill="#555" stroke="none" stroke-width="1" rx="0" /><rect x="122.5" y="89.4" width="13" height="5.2" fill="#fff" stroke="#ec9b2c" stroke-width="1" rx="0" /><rect x="128" y="91.4" width="1.6" height="1.6" fill="#555" stroke="none" stroke-width="1" rx="0" /><rect x="122.5" y="94.6" width="13" height="5.2" fill="#fff" stroke="#ec9b2c" stroke-width="1" rx="0" /><rect x="128" y="96.6" width="1.6" height="1.6" fill="#555" stroke="none" stroke-width="1" rx="0" /><path d="M203 80 L207 76 L225 76 L225 93 L221 97 L203 97 Z" fill="#3a8bd3" stroke="none" stroke-width="1" /><path d="M203 80 L221 80 L221 97 M221 80 L225 76" fill="none" stroke="#fff" stroke-width="0.9" /><path d="M286 85.5 L295 75 L306 75 L315 85.5 L306 97 L295 97 Z M286 85.5 L306 85.5 L295 75 M306 85.5 L295 97 M295 75 L306 75 M300.5 80 L300.5 80" fill="none" stroke="#3a8bd3" stroke-width="1.2" /><path d="M295 75 L315 85.5 M286 85.5 L306 97" fill="none" stroke="#7ab3e6" stroke-width="0.9" /><text x="391" y="95" font-size="21" fill="#3a8bd3" text-anchor="start" font-family="Liberation Sans" >P</text><rect x="404.5" y="83" width="2.3" height="12" fill="#3a8bd3" stroke="none" stroke-width="1" rx="0" /><rect x="404.5" y="79" width="2.3" height="2.3" fill="#3a8bd3" stroke="none" stroke-width="1" rx="0" /><text x="444" y="86" font-size="15" fill="#3a8bd3" text-anchor="start" font-family="Liberation Sans" >a</text><path d="M454 79 L459 79 M454 82.5 L459 82.5" fill="none" stroke="#3a8bd3" stroke-width="1.3" /><text x="444" y="110.5" font-size="11.5" fill="#3a8bd3" text-anchor="start" font-family="Liberation Sans" font-style="italic">f(x)</text><text x="446" y="136" font-size="12" fill="#b8b8b8" text-anchor="start" font-family="Liberation Sans" >P</text><rect x="455" y="130" width="1.5" height="7" fill="#b8b8b8" stroke="none" stroke-width="1" rx="0" /><path d="M579 81 L582 78 L598.5 78 L598.5 94 L595.5 97 L579 97 Z" fill="#e0603f" stroke="none" stroke-width="1" /><path d="M579 81 L595.5 81 L595.5 97 M595.5 81 L598.5 78" fill="none" stroke="#f7c8b8" stroke-width="0.9" /><path d="M579 87.5 L596 87.5 M588 81 L588 97" fill="none" stroke="#f7c8b8" stroke-width="0.9" /><rect x="617.5" y="74.5" width="14" height="11" fill="none" stroke="#777" stroke-width="1.1" rx="0" /><path d="M617.5 77 L631.5 77" fill="none" stroke="#777" stroke-width="1" /><path d="M621 80.5 L631 80.5" fill="none" stroke="#e0603f" stroke-width="1.6" /><path d="M623.5 78 L620.5 80.5 L623.5 83" fill="none" stroke="#e0603f" stroke-width="1.6" /><path d="M618 104 L628 104 M626 101.5 L628.5 104 M631 108 L621 108 M623 110.5 L620.5 108" fill="none" stroke="#c4c4c4" stroke-width="1.5" /><rect x="617.5" y="125.5" width="14" height="12" fill="none" stroke="#e0603f" stroke-width="1.2" rx="0" /><path d="M621 126 L621 137 M624.5 126 L624.5 137 M628 126 L628 137 M617.5 128.5 L631.5 128.5" fill="none" stroke="#e0603f" stroke-width="1" /><rect x="745.9000000000001" y="79.9" width="5.6" height="5.6" fill="#f0a540" stroke="none" stroke-width="1" rx="1.4" /><rect x="745.9000000000001" y="86.5" width="5.6" height="5.6" fill="#f0a540" stroke="none" stroke-width="1" rx="1.4" /><rect x="753.0" y="75.7" width="5.6" height="5.6" fill="#f0a540" stroke="none" stroke-width="1" rx="1.4" /><rect x="753.0" y="82.9" width="5.6" height="5.6" fill="#f0a540" stroke="none" stroke-width="1" rx="1.4" /><rect x="753.0" y="89.9" width="5.6" height="5.6" fill="#d98a28" stroke="none" stroke-width="1" rx="1.4" /><rect x="760.2" y="79.9" width="5.6" height="5.6" fill="#f0a540" stroke="none" stroke-width="1" rx="1.4" /><rect x="760.2" y="86.5" width="5.6" height="5.6" fill="#d98a28" stroke="none" stroke-width="1" rx="1.4" /><path d="M765 91 L765 96" fill="none" stroke="#7a7a7a" stroke-width="1.8" /><path d="M760.5 95 L769.5 95 L765 99.5 Z" fill="#7a7a7a" stroke="none" stroke-width="1" /><path d="M759 101.2 L771 101.2" fill="none" stroke="#7a7a7a" stroke-width="1.6" /><path d="M826 77 L830.5 72 L850 72 L850 94.5 L845 99 L826 99 Z" fill="#dcdce4" stroke="#3a8bd3" stroke-width="1.2" /><path d="M826 77 L845 77 L845 99 M845 77 L850 72" fill="none" stroke="#3a8bd3" stroke-width="1.1" /><path d="M849.5 66.5 Q853.5 72 853.5 74.5 Q853.5 78 849.5 78 Q845.5 78 845.5 74.5 Q845.5 72 849.5 66.5 Z" fill="#3aa64a" stroke="none" stroke-width="1" /><circle cx="824" cy="91.5" r="2.7" fill="#3aa64a" stroke="none" stroke-width="1"/><circle cx="824" cy="98" r="2.7" fill="#f0a540" stroke="none" stroke-width="1"/><ellipse cx="902" cy="85.5" rx="13" ry="5" fill="none" stroke="#9a9a9a" stroke-width="1" transform="rotate(30 902 85.5)"/><ellipse cx="902" cy="85.5" rx="13" ry="5" fill="none" stroke="#9a9a9a" stroke-width="1" transform="rotate(-30 902 85.5)"/><ellipse cx="902" cy="85.5" rx="3.5" ry="13" fill="none" stroke="#9a9a9a" stroke-width="1"/><circle cx="902" cy="86.5" r="2.2" fill="#3a8ad3" stroke="none" stroke-width="1"/><circle cx="893" cy="78.5" r="1.6" fill="#3a8ad3" stroke="none" stroke-width="1"/><circle cx="913" cy="83" r="1.6" fill="#3a8ad3" stroke="none" stroke-width="1"/><circle cx="898" cy="96" r="1.6" fill="#3a8ad3" stroke="none" stroke-width="1"/><path d="M912 91 L912 97" fill="none" stroke="#3a8ad3" stroke-width="2" /><path d="M907.5 96 L916.5 96 L912 100.5 Z" fill="#3a8ad3" stroke="none" stroke-width="1" /><path d="M906 102.2 L918 102.2" fill="none" stroke="#3a8ad3" stroke-width="1.6" /><path d="M963 87 L968.5 74.5 L974 87 Z" fill="none" stroke="#3a8ad3" stroke-width="1.4" /><path d="M978.5 76 L978.5 83 Q978.5 87.5 983 87.5 Q987.5 87.5 987.5 83 L987.5 76" fill="none" stroke="#3a8ad3" stroke-width="1.5" /><path d="M985 91 L985 96" fill="none" stroke="#3a8ad3" stroke-width="1.6" /><path d="M980.5 95 L989.5 95 L985 99.5 Z" fill="#3a8ad3" stroke="none" stroke-width="1" /><path d="M979 101.2 L991 101.2" fill="none" stroke="#3a8ad3" stroke-width="1.6" /><path d="M1047 81 L1050 78 L1066.5 78 L1066.5 94 L1063.5 97 L1047 97 Z" fill="#7a7a7a" stroke="none" stroke-width="1" /><path d="M1047 81 L1063.5 81 L1063.5 97 M1063.5 81 L1066.5 78" fill="none" stroke="#d8d8d8" stroke-width="0.9" /><path d="M1047 87.5 L1064 87.5 M1056 81 L1056 97" fill="none" stroke="#d8d8d8" stroke-width="0.9" /><path d="M1088 99.5 L1103 73 L1118.5 99.5 Z" fill="#b6b6b6" stroke="#8a8a8a" stroke-width="1.3" /><path d="M1095.5 86.5 L1110.5 86.5 M1091.5 93 L1114.5 93 M1099 80 L1110.5 99.5 M1095.5 86.5 L1103 99.5 M1107 80 L1095.5 99.5 M1110.5 86.5 L1103 99.5" fill="none" stroke="#eaeaea" stroke-width="0.7" /><rect x="1167" y="81.5" width="18" height="3.5" fill="#1e9ab0" stroke="none" stroke-width="1" rx="0" /><rect x="1167" y="89.5" width="18" height="3.5" fill="#1e9ab0" stroke="none" stroke-width="1" rx="0" /><path d="M1218 83 Q1221 79 1226 85" fill="none" stroke="#2a9ab8" stroke-width="1.3" /><circle cx="1230" cy="87" r="4.2" fill="none" stroke="#2a9ab8" stroke-width="1.3"/><circle cx="1241" cy="87" r="4.2" fill="none" stroke="#2a9ab8" stroke-width="1.3"/><path d="M1234 87 L1237 87 M1244 84 Q1243 80 1238 80" fill="none" stroke="#2a9ab8" stroke-width="1.2" /><path d="M1266 78 Q1269 74 1274 80" fill="none" stroke="#2a9ab8" stroke-width="1.3" /><circle cx="1278" cy="82" r="4.2" fill="none" stroke="#2a9ab8" stroke-width="1.3"/><circle cx="1289" cy="82" r="4.2" fill="none" stroke="#2a9ab8" stroke-width="1.3"/><path d="M1282 82 L1285 82 M1292 79 Q1291 75 1286 75" fill="none" stroke="#2a9ab8" stroke-width="1.2" /><path d="M1292 91 L1292 97" fill="none" stroke="#2a9ab8" stroke-width="1.8" /><path d="M1287.5 96 L1296.5 96 L1292 100.5 Z" fill="#2a9ab8" stroke="none" stroke-width="1" /><path d="M1286 102.2 L1298 102.2" fill="none" stroke="#2a9ab8" stroke-width="1.6" /><path d="M1345 79.7 L1350 74.7 L1371 74.7 L1371 94.0 L1366 99.0 L1345 99.0 Z" fill="#b0519f" stroke="none" stroke-width="1" /><path d="M1345 79.7 L1366 79.7 L1366 99.0 M1366 79.7 L1371 74.7" fill="none" stroke="#f3d6ec" stroke-width="0.9" /><path d="M1413 94 L1419 99.5 L1441.5 99.5 L1441.5 94 Z" fill="#8a8a8a" stroke="none" stroke-width="1" /><rect x="1416.5" y="74.5" width="12" height="12" fill="#fff" stroke="#888" stroke-width="1" rx="0" /><rect x="1418" y="76" width="9" height="8" fill="#b0519f" stroke="none" stroke-width="1" rx="0" /><rect x="1420.5" y="78.5" width="12" height="12" fill="#fff" stroke="#888" stroke-width="1" rx="0" /><rect x="1422" y="80" width="9" height="8" fill="#b0519f" stroke="none" stroke-width="1" rx="0" /><rect x="1424.5" y="82.5" width="14" height="12" fill="#fff" stroke="#888" stroke-width="1" rx="0" /><rect x="1426.5" y="84.5" width="10" height="7" fill="#b0519f" stroke="none" stroke-width="1" rx="0" /><rect x="1420.5" y="94.5" width="21" height="5" fill="#fff" stroke="#888" stroke-width="1" rx="0" /><rect x="1483.5" y="77.5" width="24" height="18" fill="#fff" stroke="#888" stroke-width="1" rx="0" /><rect x="1484" y="78" width="23" height="2.5" fill="#c8c8c8" stroke="none" stroke-width="1" rx="0" /><rect x="1485.5" y="81.5" width="20" height="12" fill="#b0519f" stroke="none" stroke-width="1" rx="0" /><path d="M1507 91 L1507 97" fill="none" stroke="#2f7fcf" stroke-width="1.8" /><path d="M1502.5 96 L1511.5 96 L1507 100.5 Z" fill="#2f7fcf" stroke="none" stroke-width="1" /><path d="M1501 102.2 L1513 102.2" fill="none" stroke="#2f7fcf" stroke-width="1.6" /><rect x="1565.5" y="74.5" width="24" height="18" fill="#fff" stroke="#3a88cc" stroke-width="1.6" rx="1" /><rect x="1566.5" y="75.5" width="22" height="2.5" fill="#cdd9e8" stroke="none" stroke-width="1" rx="0" /><rect x="1574.5" y="82.5" width="21" height="15" fill="#fff" stroke="#3a88cc" stroke-width="1.6" rx="1" /><rect x="1575.5" y="83.5" width="19" height="2.5" fill="#cdd9e8" stroke="none" stroke-width="1" rx="0" /><rect x="1635.5" y="77.5" width="25" height="19" fill="#fff" stroke="#3a88cc" stroke-width="1.6" rx="1" /><rect x="1636.5" y="78.5" width="23" height="2.5" fill="#cdd9e8" stroke="none" stroke-width="1" rx="0" /><path d="M1652 84.5 A5 5 0 1 0 1653.5 89" fill="none" stroke="#3a88cc" stroke-width="1.3" /><path d="M1650 83 L1654 83.5 L1653.5 87.5 Z" fill="#3a88cc" stroke="none" stroke-width="1" /><path d="M16.4 262.5 L20 266.1 L23.6 262.5" fill="none" stroke="#222" stroke-width="1.3"/><path d="M31 264 L37 258 L42 258 L47 264 L41 270 L36 270 Z" fill="#3a8ad3" stroke="none" stroke-width="1" /><path d="M32 264 L40 264 M40 264 L36 259 M40 264 L36 269" fill="none" stroke="#fff" stroke-width="0.9" /><path d="M36.4 280.5 L40 284.1 L43.6 280.5" fill="none" stroke="#222" stroke-width="1.3"/><circle cx="59" cy="282" r="7" fill="none" stroke="#3a8ad3" stroke-width="1.2"/><ellipse cx="59" cy="282" rx="3" ry="7" fill="none" stroke="#3a8ad3" stroke-width="1"/><path d="M52 282 L66 282 M53 278.5 L65 278.5 M53 285.5 L65 285.5" fill="none" stroke="#3a8ad3" stroke-width="1" /><text x="73" y="305" font-size="12" fill="#3a8ad3" text-anchor="start" font-family="Liberation Sans" >P</text><rect x="82.5" y="299" width="1.3" height="7" fill="#3a8ad3" stroke="none" stroke-width="1" rx="0" /><rect x="82.5" y="297" width="1.3" height="1.3" fill="#3a8ad3" stroke="none" stroke-width="1" rx="0" /><text x="73" y="323" font-size="12" fill="#3a8ad3" text-anchor="start" font-family="Liberation Sans" >P</text><rect x="82.5" y="317" width="1.3" height="7" fill="#3a8ad3" stroke="none" stroke-width="1" rx="0" /><rect x="82.5" y="315" width="1.3" height="1.3" fill="#3a8ad3" stroke="none" stroke-width="1" rx="0" /><text x="73" y="341" font-size="12" fill="#3a8ad3" text-anchor="start" font-family="Liberation Sans" >P</text><rect x="82.5" y="335" width="1.3" height="7" fill="#3a8ad3" stroke="none" stroke-width="1" rx="0" /><rect x="82.5" y="333" width="1.3" height="1.3" fill="#3a8ad3" stroke="none" stroke-width="1" rx="0" /><text x="73" y="359" font-size="12" fill="#3a8ad3" text-anchor="start" font-family="Liberation Sans" >P</text><rect x="82.5" y="353" width="1.3" height="7" fill="#3a8ad3" stroke="none" stroke-width="1" rx="0" /><rect x="82.5" y="351" width="1.3" height="1.3" fill="#3a8ad3" stroke="none" stroke-width="1" rx="0" /><path d="M71 374 L77 368 L83 370 L86 374 L80 380 L75 379 Z" fill="#3a8ad3" stroke="none" stroke-width="1" /><path d="M81 363 L87 367 L81 370 Z" fill="#1fa0a8" stroke="none" stroke-width="1" /><path d="M72 374 L80 375 L76 369 M80 375 L76 379" fill="none" stroke="#fff" stroke-width="0.8" /><circle cx="79" cy="390" r="7" fill="none" stroke="#f0a540" stroke-width="1.3"/><rect x="77.7" y="385.2" width="2.6" height="2.6" fill="#e8962c" stroke="none" stroke-width="1" rx="0" /><rect x="74.7" y="388.7" width="2.6" height="2.6" fill="#e8962c" stroke="none" stroke-width="1" rx="0" /><rect x="77.7" y="388.7" width="2.6" height="2.6" fill="#e8962c" stroke="none" stroke-width="1" rx="0" /><rect x="80.7" y="388.7" width="2.6" height="2.6" fill="#e8962c" stroke="none" stroke-width="1" rx="0" /><rect x="77.7" y="392.2" width="2.6" height="2.6" fill="#e8962c" stroke="none" stroke-width="1" rx="0" /><rect x="74.7" y="392.2" width="2.6" height="2.6" fill="#e8962c" stroke="none" stroke-width="1" rx="0" /><rect x="80.7" y="392.2" width="2.6" height="2.6" fill="#e8962c" stroke="none" stroke-width="1" rx="0" /><path d="M36.4 406.5 L40 410.1 L43.6 406.5" fill="none" stroke="#222" stroke-width="1.3"/><path d="M52 403.5 L54.5 401 L65 401 L65 411.5 L62.5 414 L52 414 Z" fill="#3a8ad3" stroke="none" stroke-width="1" /><path d="M52 403.5 L62.5 403.5 L62.5 414 M62.5 403.5 L65 401" fill="none" stroke="#fff" stroke-width="0.9" /><path d="M58.2 422.4 L61.8 426 L58.2 429.6" fill="none" stroke="#555" stroke-width="1.3"/><path d="M74 422.5 L84 422.5 M74 426 L84 426 M74 429.5 L84 429.5" fill="none" stroke="#3a8ad3" stroke-width="1.8" /><path d="M58.2 440.4 L61.8 444 L58.2 447.6" fill="none" stroke="#555" stroke-width="1.3"/><rect x="71.5" y="436.5" width="15" height="15" fill="none" stroke="#3aa64a" stroke-width="1.2" rx="0" /><path d="M73 438 Q77 443 80 438 M74 450 Q78 434 85 450" fill="none" stroke="#e0603f" stroke-width="1.1" /><path d="M58.2 458.4 L61.8 462 L58.2 465.6" fill="none" stroke="#555" stroke-width="1.3"/><rect x="76.8" y="453.8" width="4.4" height="4.4" fill="#f5ad28" stroke="none" stroke-width="1" rx="0" /><rect x="71.8" y="457.8" width="4.4" height="4.4" fill="#f5ad28" stroke="none" stroke-width="1" rx="0" /><rect x="76.8" y="457.8" width="4.4" height="4.4" fill="#f0a030" stroke="none" stroke-width="1" rx="0" /><rect x="81.8" y="457.8" width="4.4" height="4.4" fill="#ec9a2a" stroke="none" stroke-width="1" rx="0" /><rect x="71.8" y="462.8" width="4.4" height="4.4" fill="#f0a030" stroke="none" stroke-width="1" rx="0" /><rect x="76.8" y="462.8" width="4.4" height="4.4" fill="#e08a20" stroke="none" stroke-width="1" rx="0" /><rect x="81.8" y="462.8" width="4.4" height="4.4" fill="#d58020" stroke="none" stroke-width="1" rx="0" /><rect x="76.8" y="466.8" width="4.4" height="4.4" fill="#cc7a20" stroke="none" stroke-width="1" rx="0" /><path d="M58.2 476.4 L61.8 480 L58.2 483.6" fill="none" stroke="#555" stroke-width="1.3"/><rect x="71" y="478" width="16" height="4" fill="#c9d4e6" stroke="#3a78c0" stroke-width="1" rx="0" /><rect x="74.5" y="473.5" width="9" height="4.5" fill="#eee" stroke="#3a78c0" stroke-width="1" rx="0" /><rect x="74.5" y="482" width="9" height="4" fill="#eee" stroke="#3a78c0" stroke-width="1" rx="0" /><rect x="77.5" y="486" width="3" height="2" fill="none" stroke="#3a78c0" stroke-width="1" rx="0" /><path d="M56.4 496.5 L60 500.1 L63.6 496.5" fill="none" stroke="#222" stroke-width="1.3"/><rect x="74" y="493" width="12" height="11" fill="#dedede" stroke="#3a8ad3" stroke-width="1" rx="0" /><path d="M74 493 L76 491 L84 491" fill="none" stroke="#3a8ad3" stroke-width="1" /><circle cx="72.5" cy="499.5" r="2" fill="#3aa64a" stroke="none" stroke-width="1"/><circle cx="72.5" cy="504.5" r="2" fill="#f0a540" stroke="none" stroke-width="1"/><path d="M85.5 489 Q88 493 88 494 Q88 496 85.5 496 Q83 496 83 494 Q83 493 85.5 489 Z" fill="#3aa64a" stroke="none" stroke-width="1" /><path d="M76.4 514.5 L80 518.0999999999999 L83.6 514.5" fill="none" stroke="#222" stroke-width="1.3"/><path d="M93 511 L105 511 Q107 511 107 514 L107 519 Q107 522 105 522 L93 522 Q91 522 91 519 L91 514 Q91 511 93 511 Z" fill="#3a8ad3" stroke="none" stroke-width="1" /><path d="M93 516 L107 516 M93 511 Q95 516 93 522" fill="none" stroke="#fff" stroke-width="0.9" /><rect x="90" y="506" width="6" height="6" fill="#f9fafe" stroke="none" stroke-width="1" rx="0" /><text x="90.5" y="511.5" font-size="6.5" fill="#111" text-anchor="start" font-family="Liberation Sans" font-weight="bold">D</text><path d="M113 529 L125 529 Q127 529 127 532 L127 537 Q127 540 125 540 L113 540 Q111 540 111 537 L111 532 Q111 529 113 529 Z" fill="#3a8ad3" stroke="none" stroke-width="1" /><path d="M113 534 L127 534 M113 529 Q115 534 113 540" fill="none" stroke="#fff" stroke-width="0.9" /><path d="M113 547 L125 547 Q127 547 127 550 L127 555 Q127 558 125 558 L113 558 Q111 558 111 555 L111 550 Q111 547 113 547 Z" fill="#3a8ad3" stroke="none" stroke-width="1" /><path d="M113 552 L127 552 M113 547 Q115 552 113 558" fill="none" stroke="#fff" stroke-width="0.9" /><circle cx="114" cy="552" r="2.6" fill="#e85a2c" stroke="#fff" stroke-width="0.8"/><path d="M113 565 L125 565 Q127 565 127 568 L127 573 Q127 576 125 576 L113 576 Q111 576 111 573 L111 568 Q111 565 113 565 Z" fill="#3a8ad3" stroke="none" stroke-width="1" /><path d="M113 570 L127 570 M113 565 Q115 570 113 576" fill="none" stroke="#fff" stroke-width="0.9" /><circle cx="114" cy="570" r="2.6" fill="#e85a2c" stroke="#fff" stroke-width="0.8"/><path d="M93 583 L105 583 Q107 583 107 586 L107 591 Q107 594 105 594 L93 594 Q91 594 91 591 L91 586 Q91 583 93 583 Z" fill="#3a8ad3" stroke="none" stroke-width="1" /><path d="M93 583 L105 583 Q107 583 107 586 L107 588 L91 588 L91 586 Q91 583 93 583 Z" fill="#dadde2" stroke="none" stroke-width="1" /><path d="M93 588 L107 588 M93 583 Q95 588 93 594" fill="none" stroke="#fff" stroke-width="0.9" /><rect x="90" y="578" width="6" height="6" fill="#f9fafe" stroke="none" stroke-width="1" rx="0" /><text x="90.5" y="583.5" font-size="6.5" fill="#111" text-anchor="start" font-family="Liberation Sans" font-weight="bold">D</text><path d="M93 601 L105 601 Q107 601 107 604 L107 609 Q107 612 105 612 L93 612 Q91 612 91 609 L91 604 Q91 601 93 601 Z" fill="#3a8ad3" stroke="none" stroke-width="1" /><path d="M93 606 L107 606 M93 601 Q95 606 93 612" fill="none" stroke="#fff" stroke-width="0.9" /><rect x="90" y="596" width="6" height="6" fill="#f9fafe" stroke="none" stroke-width="1" rx="0" /><text x="90.5" y="601.5" font-size="6.5" fill="#111" text-anchor="start" font-family="Liberation Sans" font-weight="bold">D</text><path d="M93 619 L105 619 Q107 619 107 622 L107 627 Q107 630 105 630 L93 630 Q91 630 91 627 L91 622 Q91 619 93 619 Z" fill="#3a8ad3" stroke="none" stroke-width="1" /><path d="M93 624 L107 624 M93 619 Q95 624 93 630" fill="none" stroke="#fff" stroke-width="0.9" /><path d="M58.2 638.4 L61.8 642 L58.2 645.6" fill="none" stroke="#555" stroke-width="1.3"/><path d="M73 633 L81 639 L78 640 L84 645" fill="none" stroke="#3a78c0" stroke-width="1.6" /><path d="M71 647.5 L75 647.5 M73 645.5 L73 649.5" fill="none" stroke="#d8204a" stroke-width="1.3" /><path d="M82 649 L87 649" fill="none" stroke="#3a78c0" stroke-width="1.2" /><path d="M58.2 656.4 L61.8 660 L58.2 663.6" fill="none" stroke="#555" stroke-width="1.3"/><path d="M73.5 656.5 L76.0 654 L86.5 654 L86.5 664.0 L84.0 666.5 L73.5 666.5 Z" fill="#f0a540" stroke="none" stroke-width="1" /><path d="M73.5 656.5 L84.0 656.5 L84.0 666.5 M84.0 656.5 L86.5 654" fill="none" stroke="#e06a2a" stroke-width="0.9" /><path d="M72 653 Q70 660 72 667" fill="none" stroke="#f0a540" stroke-width="1.2" /><path d="M58.2 674.4 L61.8 678 L58.2 681.6" fill="none" stroke="#555" stroke-width="1.3"/><text x="79" y="676.5" font-size="8" fill="#3a78c0" text-anchor="middle" font-family="Liberation Sans" >d</text><path d="M74 678 L84 678" fill="none" stroke="#3a78c0" stroke-width="1" /><text x="79" y="686.5" font-size="8" fill="#3a78c0" text-anchor="middle" font-family="Liberation Sans" >dt</text><circle cx="79" cy="691.5" r="3.5" fill="none" stroke="#999" stroke-width="1"/><rect x="71" y="698.5" width="3" height="3" fill="#3a78c0" stroke="none" stroke-width="1" rx="0" /><rect x="75.5" y="698.5" width="3" height="3" fill="#3aa64a" stroke="none" stroke-width="1" rx="0" /><rect x="80" y="698.5" width="3" height="3" fill="#e8703a" stroke="none" stroke-width="1" rx="0" /><rect x="84" y="698.5" width="3" height="3" fill="#d81b8a" stroke="none" stroke-width="1" rx="0" /><path d="M75 702 L75 704 L83 704 L83 702 M79 702 L79 704" fill="none" stroke="#777" stroke-width="1" /><path d="M58.2 710.4 L61.8 714 L58.2 717.6" fill="none" stroke="#555" stroke-width="1.3"/><path d="M71 721 L79 706 L87 721 Z" fill="#d0d0d0" stroke="#888" stroke-width="1" /><path d="M75 714 L83 714 L79 721 Z" fill="none" stroke="#999" stroke-width="0.7" /><path d="M38.2 728.4 L41.8 732 L38.2 735.6" fill="none" stroke="#555" stroke-width="1.3"/><path d="M50 731 Q53 728 56 733" fill="none" stroke="#1fa0b8" stroke-width="1.2" /><circle cx="59" cy="733.5" r="3" fill="none" stroke="#1fa0b8" stroke-width="1.2"/><circle cx="65.5" cy="733.5" r="3" fill="none" stroke="#1fa0b8" stroke-width="1.2"/><path d="M38.2 746.4 L41.8 750 L38.2 753.6" fill="none" stroke="#555" stroke-width="1.3"/><path d="M51 754 L54 758 L67 758 L67 754 Z" fill="#888" stroke="none" stroke-width="1" /><rect x="53.5" y="742.5" width="10" height="10" fill="#fff" stroke="#888" stroke-width="1" rx="0" /><rect x="55.5" y="744.5" width="10" height="10" fill="#fff" stroke="#888" stroke-width="1" rx="0" /><rect x="57.5" y="746.5" width="10" height="10" fill="#fff" stroke="#888" stroke-width="1" rx="0" /><rect x="59.5" y="748.5" width="6" height="6" fill="#b0519f" stroke="none" stroke-width="1" rx="0" /><path d="M14 214.5 L27 214.5" fill="none" stroke="#3a8ad3" stroke-width="1.6" /><path d="M13 214.5 L18 210.5 L18 218.5 Z" fill="#3a8ad3" stroke="none" stroke-width="1" /><path d="M35.5 214.5 L48 214.5" fill="none" stroke="#999" stroke-width="1.4" /><path d="M50 214.5 L45 211 L45 218 Z" fill="#999" stroke="none" stroke-width="1" /><path d="M65.3 210 L65.3 222" fill="none" stroke="#999" stroke-width="1.4" /><path d="M65.3 208 L61.8 213 L68.8 213 Z" fill="#999" stroke="none" stroke-width="1" /><path d="M88.5 208 L88.5 220" fill="none" stroke="#3a8ad3" stroke-width="1.6" /><path d="M88.5 222 L84.5 216.5 L92.5 216.5 Z" fill="#3a8ad3" stroke="none" stroke-width="1" /><path d="M105 209.5 L118 209.5" fill="none" stroke="#3a8ad3" stroke-width="1.4" /><ellipse cx="111.5" cy="215" rx="5.5" ry="3" fill="none" stroke="#3a8ad3" stroke-width="1.3"/><circle cx="111.5" cy="215" r="1.3" fill="#3a8ad3" stroke="none" stroke-width="1"/><path d="M128 208.5 L138 208.5" fill="none" stroke="#3a8ad3" stroke-width="1.2" /><path d="M128 211.3 L138 211.3" fill="none" stroke="#3a8ad3" stroke-width="1.2" /><path d="M128 214.1 L138 214.1" fill="none" stroke="#3a8ad3" stroke-width="1.2" /><path d="M128 216.9 L138 216.9" fill="none" stroke="#3a8ad3" stroke-width="1.2" /><path d="M128 219.7 L138 219.7" fill="none" stroke="#3a8ad3" stroke-width="1.2" /><path d="M141.5 209 L141.5 220" fill="none" stroke="#3a8ad3" stroke-width="1.4" /><path d="M141.5 207.5 L138.5 211.5 L144.5 211.5 Z" fill="#3a8ad3" stroke="none" stroke-width="1" /><path d="M149.2 212.75 L156.2 212.75 L152.7 216.75 Z" fill="#111"/><path d="M168.5 208.5 L178.5 208.5" fill="none" stroke="#2f7cc4" stroke-width="1.2" /><path d="M168.5 211.3 L178.5 211.3" fill="none" stroke="#2f7cc4" stroke-width="1.2" /><path d="M168.5 214.1 L178.5 214.1" fill="none" stroke="#2f7cc4" stroke-width="1.2" /><path d="M168.5 216.9 L178.5 216.9" fill="none" stroke="#2f7cc4" stroke-width="1.2" /><path d="M168.5 219.7 L178.5 219.7" fill="none" stroke="#2f7cc4" stroke-width="1.2" /><path d="M182.0 208 L182.0 219" fill="none" stroke="#3a8ad3" stroke-width="1.4" /><path d="M182.0 221.5 L179.0 217.5 L185.0 217.5 Z" fill="#3a8ad3" stroke="none" stroke-width="1" /><path d="M190.5 212.75 L197.5 212.75 L194 216.75 Z" fill="#111"/><path d="M211 208.5 L221 208.5" fill="none" stroke="#888" stroke-width="1.2" /><path d="M211 211.3 L221 211.3" fill="none" stroke="#888" stroke-width="1.2" /><path d="M211 214.1 L221 214.1" fill="none" stroke="#888" stroke-width="1.2" /><path d="M211 216.9 L221 216.9" fill="none" stroke="#888" stroke-width="1.2" /><path d="M211 219.7 L221 219.7" fill="none" stroke="#888" stroke-width="1.2" /><path d="M230.0 212.75 L237.0 212.75 L233.5 216.75 Z" fill="#111"/><rect x="252" y="208" width="11" height="5" fill="#3a8ad3" stroke="none" stroke-width="1" rx="0" /><path d="M249 213 L265.5 213 L259 218.5 L255.5 218.5 Z" fill="#888" stroke="none" stroke-width="1" /><rect x="256" y="218" width="2.5" height="4" fill="#3a8ad3" stroke="none" stroke-width="1" rx="0" /><path d="M270.2 212.75 L277.2 212.75 L273.7 216.75 Z" fill="#111"/><path d="M349.5 236 A5.5 5.5 0 1 0 350 242" fill="none" stroke="#3a8ad3" stroke-width="1.5" /><path d="M346.5 234.5 L351.5 233.5 L351 238.5 Z" fill="#3a8ad3" stroke="none" stroke-width="1" /><path d="M317.5 188 L326.5 188 L322 192.5 Z" fill="#a8a8a8" stroke="none" stroke-width="1" /><rect x="332.5" y="185.5" width="10" height="8" fill="none" stroke="#a8a8a8" stroke-width="1.3" rx="0" /><rect x="332.5" y="185.5" width="10" height="2" fill="#a8a8a8" stroke="none" stroke-width="1" rx="0" /><rect x="349.5" y="184.5" width="5" height="6" fill="#a8a8a8" stroke="none" stroke-width="1" rx="0" /><path d="M348 190.5 L356 190.5 M352 190.5 L352 195" fill="none" stroke="#a8a8a8" stroke-width="1.2" /><path d="M692.5 188 L701.5 188 L697 192.5 Z" fill="#a6cbee" stroke="none" stroke-width="1" /><rect x="707.5" y="185.5" width="10" height="8" fill="none" stroke="#a6cbee" stroke-width="1.3" rx="0" /><rect x="707.5" y="185.5" width="10" height="2" fill="#a6cbee" stroke="none" stroke-width="1" rx="0" /><rect x="724.5" y="184.5" width="5" height="6" fill="#a6cbee" stroke="none" stroke-width="1" rx="0" /><path d="M723 190.5 L731 190.5 M727 190.5 L727 195" fill="none" stroke="#a6cbee" stroke-width="1.2" /><path d="M1872.5 188 L1881.5 188 L1877 192.5 Z" fill="#a8a8a8" stroke="none" stroke-width="1" /><rect x="1887.5" y="185.5" width="10" height="8" fill="none" stroke="#a8a8a8" stroke-width="1.3" rx="0" /><rect x="1887.5" y="185.5" width="10" height="2" fill="#a8a8a8" stroke="none" stroke-width="1" rx="0" /><rect x="1904.5" y="184.5" width="5" height="6" fill="#a8a8a8" stroke="none" stroke-width="1" rx="0" /><path d="M1903 190.5 L1911 190.5 M1907 190.5 L1907 195" fill="none" stroke="#a8a8a8" stroke-width="1.2" /><path d="M1872.5 981 L1881.5 981 L1877 985.5 Z" fill="#a8a8a8" stroke="none" stroke-width="1" /><rect x="1887.5" y="978.5" width="10" height="8" fill="none" stroke="#a8a8a8" stroke-width="1.3" rx="0" /><rect x="1887.5" y="978.5" width="10" height="2" fill="#a8a8a8" stroke="none" stroke-width="1" rx="0" /><rect x="1904.5" y="977.5" width="5" height="6" fill="#a8a8a8" stroke="none" stroke-width="1" rx="0" /><path d="M1903 983.5 L1911 983.5 M1907 983.5 L1907 988" fill="none" stroke="#a8a8a8" stroke-width="1.2" /><rect x="713.5" y="241.5" width="11" height="10" fill="#fff" stroke="#666" stroke-width="1" rx="0" /><path d="M715.5 245 L722.5 245 M717 248 L722.5 248" fill="none" stroke="#2a9a7a" stroke-width="1" /><path d="M712.5 255 L716.5 251" fill="none" stroke="#2a9a7a" stroke-width="1.3" /><path d="M373.8 280.9 L377 284.1 L380.2 280.9" fill="none" stroke="#2552a0" stroke-width="1.2"/><path d="M373.8 532.9 L377 536.1 L380.2 532.9" fill="none" stroke="#2552a0" stroke-width="1.2"/><path d="M373.8 622.9 L377 626.1 L380.2 622.9" fill="none" stroke="#2552a0" stroke-width="1.2"/><path d="M373.8 734.9 L377 738.1 L380.2 734.9" fill="none" stroke="#2552a0" stroke-width="1.2"/><path d="M375.4 472.8 L378.6 476 L375.4 479.2" fill="none" stroke="#222" stroke-width="1.3"/><path d="M375.4 501.8 L378.6 505 L375.4 508.2" fill="none" stroke="#222" stroke-width="1.3"/><rect x="447" y="308" width="5" height="5" fill="none" stroke="#999" stroke-width="0.9" rx="0" /><rect x="451" y="312" width="5" height="5" fill="none" stroke="#999" stroke-width="0.9" rx="0" /><rect x="455" y="315.5" width="5" height="5" fill="#3a8ad3" stroke="none" stroke-width="1" rx="0" /><path d="M715 312.5 L723 312.5 L719 317.0 Z" fill="#111"/><path d="M687 586.5 L695 586.5 L691 591.0 Z" fill="#111"/><path d="M715 787.5 L723 787.5 L719 792.0 Z" fill="#111"/><rect x="377.5" y="344.5" width="26" height="13" fill="#f2f2f2" stroke="#555" stroke-width="1.2" rx="2" /><rect x="379.5" y="347" width="15" height="8" fill="#4caf50" stroke="none" stroke-width="1" rx="1" /><rect x="395" y="346.5" width="7" height="9" fill="#bbb" stroke="#666" stroke-width="0.8" rx="0" /><rect x="686" y="334" width="5" height="5" fill="none" stroke="#999" stroke-width="0.9" rx="0" /><rect x="690" y="338" width="5" height="5" fill="none" stroke="#999" stroke-width="0.9" rx="0" /><rect x="694" y="341" width="5" height="5" fill="#3a8ad3" stroke="none" stroke-width="1" rx="0" /><rect x="686.5" y="352.5" width="8" height="10" fill="#fff" stroke="#888" stroke-width="1" rx="0" /><rect x="690.5" y="355.5" width="9" height="10" fill="#fff" stroke="#3a8ad3" stroke-width="1.2" rx="0" /><path d="M692.5 359 L697.5 359 M692.5 361.5 L697.5 361.5" fill="none" stroke="#3a8ad3" stroke-width="0.9" /><rect x="686.5" y="373.5" width="9" height="10" fill="#fff" stroke="#888" stroke-width="1.2" rx="0" /><rect x="690.5" y="377.5" width="9" height="10" fill="#fff" stroke="#3a8ad3" stroke-width="1.2" rx="0" /><path d="M692 395 L692 403 M688 399 L696 399" fill="none" stroke="#777" stroke-width="1.2" /><rect x="689" y="396" width="6" height="6" fill="none" stroke="#777" stroke-width="0.8" rx="0" /><path d="M721 333 L721 345 M715 339 L727 339" fill="none" stroke="#9a9a9a" stroke-width="1.1" /><path d="M715 359 L727 359" fill="none" stroke="#3a8ad3" stroke-width="1.3" /><rect x="714.5" y="372.5" width="13" height="13" fill="none" stroke="#3a8ad3" stroke-width="1.2" rx="0" stroke-dasharray="2 1.2"/><path d="M716 371 L720 379" fill="none" stroke="#5a4a3a" stroke-width="1" /><path d="M718 378 L722 377 L722 385 L718 384 Z" fill="#e7a64a" stroke="none" stroke-width="1" /><rect x="711.5" y="389.5" width="20" height="20" fill="#cde4f7" stroke="#a9cdee" stroke-width="1" rx="2" /><path d="M715.5 393 L727.5 393" fill="none" stroke="#3a8ad3" stroke-width="1.3" /><ellipse cx="721.5" cy="400" rx="5" ry="2.8" fill="none" stroke="#3a8ad3" stroke-width="1.2"/><circle cx="721.5" cy="400" r="1.2" fill="#3a8ad3" stroke="none" stroke-width="1"/><path d="M714 582.5 L720 582.5 M714 585 L720 585 M714 587.5 L720 587.5 M714 590 L724 590 M714 592.5 L724 592.5" fill="none" stroke="#c8c8c8" stroke-width="1" /><path d="M722 584 L722 589" fill="none" stroke="#c8c8c8" stroke-width="1" /><circle cx="754.5" cy="213.0" r="5" fill="none" stroke="#3a8ad3" stroke-width="1.7"/><path d="M758 216.5 L762 220.5" fill="none" stroke="#3a8ad3" stroke-width="2.2" /><path d="M752 213.0 L757 213.0" fill="none" stroke="#3a8ad3" stroke-width="1.3" /><path d="M754.5 210.5 L754.5 215.5" fill="none" stroke="#3a8ad3" stroke-width="1.3" /><circle cx="778.2" cy="213.0" r="5" fill="none" stroke="#3a8ad3" stroke-width="1.7"/><path d="M781.7 216.5 L785.7 220.5" fill="none" stroke="#3a8ad3" stroke-width="2.2" /><path d="M775.7 213.0 L780.7 213.0" fill="none" stroke="#3a8ad3" stroke-width="1.3" /><rect x="795.5" y="213.5" width="7" height="7" fill="none" stroke="#3a8ad3" stroke-width="1.2" rx="0" stroke-dasharray="1.8 1"/><circle cx="803.5" cy="213.0" r="5" fill="none" stroke="#3a8ad3" stroke-width="1.7"/><path d="M807 216.5 L811 220.5" fill="none" stroke="#3a8ad3" stroke-width="2.2" /><path d="M801 213.0 L806 213.0" fill="none" stroke="#3a8ad3" stroke-width="1.3" /><path d="M803.5 210.5 L803.5 215.5" fill="none" stroke="#3a8ad3" stroke-width="1.3" /><path d="M817.3 212.75 L824.3 212.75 L820.8 216.75 Z" fill="#111"/><rect x="839" y="210" width="9" height="9" fill="none" stroke="#777" stroke-width="1" rx="0" /><path d="M843.5 211.5 L843.5 217.5 M840.5 214.5 L846.5 214.5" fill="none" stroke="#777" stroke-width="1" /><path d="M836.5 214.5 L838.5 212.5 L838.5 216.5 Z M850.5 214.5 L848.5 212.5 L848.5 216.5 Z M843.5 207.5 L841.5 209.5 L845.5 209.5 Z M843.5 221.5 L841.5 219.5 L845.5 219.5 Z" fill="#3a8ad3" stroke="none" stroke-width="1" /><rect x="859.5" y="207.5" width="14" height="14" fill="none" stroke="#777" stroke-width="1.3" rx="0" /><path d="M866.5 209.5 L866.5 219.5 M861.5 214.5 L871.5 214.5" fill="none" stroke="#3a8ad3" stroke-width="1.3" /><path d="M866.5 208.5 L864.5 211 L868.5 211 Z M866.5 220.5 L864.5 218 L868.5 218 Z M860.5 214.5 L863 212.5 L863 216.5 Z M872.5 214.5 L870 212.5 L870 216.5 Z" fill="#3a8ad3" stroke="none" stroke-width="1" /><path d="M882.5 206 L882.5 223" fill="none" stroke="#d0d2d8" stroke-width="1" /><path d="M1023 206 L1023 223" fill="none" stroke="#d0d2d8" stroke-width="1" /><path d="M1071.6 206 L1071.6 223" fill="none" stroke="#d0d2d8" stroke-width="1" /><path d="M1120.5 206 L1120.5 223" fill="none" stroke="#d0d2d8" stroke-width="1" /><path d="M1256 206 L1256 223" fill="none" stroke="#d0d2d8" stroke-width="1" /><path d="M1351.7 206 L1351.7 223" fill="none" stroke="#d0d2d8" stroke-width="1" /><path d="M1550.2 206 L1550.2 223" fill="none" stroke="#d0d2d8" stroke-width="1" /><path d="M1621.5 206 L1621.5 223" fill="none" stroke="#d0d2d8" stroke-width="1" /><path d="M897.7 216 L897.7 207 M897.7 216 L890 212.5 M897.7 216 L906 211" fill="none" stroke="#000" stroke-width="0" /><path d="M897.7 216 L897.7 207.5" fill="none" stroke="#3a8ad3" stroke-width="1.2" /><path d="M897.7 216 L890.5 211.5" fill="none" stroke="#3aa64a" stroke-width="1.2" /><path d="M897.7 216 L906 212" fill="none" stroke="#d8204a" stroke-width="1.2" /><path d="M911.8 212.75 L918.8 212.75 L915.3 216.75 Z" fill="#111"/><path d="M932 206.5 L932 221.5 L946 221.5" fill="none" stroke="#3aa64a" stroke-width="1.1" /><path d="M932 221.5 L946 221.5" fill="none" stroke="#d8204a" stroke-width="1.1" /><text x="940" y="216.0" font-size="9" fill="#9a9a9a" text-anchor="middle" font-family="Liberation Sans" >xy</text><path d="M955 206.5 L955 221.5 L969 221.5" fill="none" stroke="#3a8ad3" stroke-width="1.1" /><path d="M955 221.5 L969 221.5" fill="none" stroke="#3aa64a" stroke-width="1.1" /><text x="963" y="216.0" font-size="9" fill="#9a9a9a" text-anchor="middle" font-family="Liberation Sans" >yz</text><path d="M978 206.5 L978 221.5 L992 221.5" fill="none" stroke="#3a8ad3" stroke-width="1.1" /><path d="M978 221.5 L992 221.5" fill="none" stroke="#d8204a" stroke-width="1.1" /><text x="986" y="216.0" font-size="9" fill="#9a9a9a" text-anchor="middle" font-family="Liberation Sans" >xz</text><rect x="1000.5" y="208" width="8" height="13" fill="#3a8ad3" stroke="none" stroke-width="1" rx="1.5" /><path d="M1008.5 211.5 L1015.5 208.5 L1015.5 220.5 L1008.5 217.5 Z" fill="#3a8ad3" stroke="none" stroke-width="1" /><path d="M1043.5 208.5 A6 6 0 1 0 1045.5 214" fill="none" stroke="#3a8ad3" stroke-width="1.7" /><path d="M1041 206 L1046.5 208.5 L1042 212 Z" fill="#3a8ad3" stroke="none" stroke-width="1" /><path d="M1052.1 212.75 L1059.1 212.75 L1055.6 216.75 Z" fill="#111"/><path d="M1081 207.5 L1093 207.5 Q1095.5 207.5 1095.5 214.5 Q1095.5 221.5 1093 221.5 L1081 221.5 Q1078.5 221.5 1078.5 214.5 Q1078.5 207.5 1081 207.5 Z" fill="#3a8ad3" stroke="none" stroke-width="1" /><path d="M1100.9 212.75 L1107.9 212.75 L1104.4 216.75 Z" fill="#111"/><rect x="1128" y="211" width="16" height="10" fill="#d8d8d8" stroke="#9a9a9a" stroke-width="1" rx="3" /><rect x="1132.5" y="207.5" width="8" height="6" fill="#3a8ad3" stroke="#3a8ad3" stroke-width="1" rx="0" stroke-dasharray="1.5 1"/><path d="M1150.1 212.75 L1157.1 212.75 L1153.6 216.75 Z" fill="#111"/><rect x="1169" y="211" width="16" height="10" fill="#3a8ad3" stroke="none" stroke-width="1" rx="3" /><rect x="1173" y="207.5" width="8" height="6" fill="#ddd" stroke="#fff" stroke-width="1" rx="0" stroke-dasharray="1.5 1"/><path d="M1190.7 212.75 L1197.7 212.75 L1194.2 216.75 Z" fill="#111"/><rect x="1211.5" y="207.5" width="13" height="13" fill="none" stroke="#3a8ad3" stroke-width="1.2" rx="0" stroke-dasharray="2 1.2"/><rect x="1214" y="210" width="6" height="6" fill="#3a8ad3" stroke="none" stroke-width="1" rx="0" /><path d="M1219 215 L1226 222" fill="none" stroke="#2c6fb0" stroke-width="1.6" /><rect x="1234.5" y="207.5" width="13" height="13" fill="none" stroke="#3a8ad3" stroke-width="1.2" rx="0" stroke-dasharray="2 1.2"/><path d="M1234 206 L1239 214" fill="none" stroke="#5a4a3a" stroke-width="1" /><path d="M1237 213 L1242 212 L1241 222 L1237 221 Z" fill="#e7a64a" stroke="none" stroke-width="1" /><ellipse cx="1272" cy="214.5" rx="7" ry="3.5" fill="none" stroke="#3a8ad3" stroke-width="1.5"/><path d="M1265 209 L1279 220" fill="none" stroke="#3a8ad3" stroke-width="1.5" /><path d="M1292 212 A4.5 4.5 0 1 1 1297 216" fill="none" stroke="#3a8ad3" stroke-width="1.5" /><ellipse cx="1290" cy="220" rx="3" ry="1.8" fill="#3a8ad3"/><ellipse cx="1299" cy="220" rx="3" ry="1.8" fill="none" stroke="#3a8ad3" stroke-width="1"/><rect x="1310.5" y="208.5" width="15" height="13" fill="none" stroke="#3a8ad3" stroke-width="1.2" rx="0" /><path d="M1310.5 211 L1325.5 211" fill="none" stroke="#3a8ad3" stroke-width="1" /><ellipse cx="1318" cy="216" rx="4.5" ry="2.5" fill="none" stroke="#3a8ad3" stroke-width="1.1"/><path d="M1331.8 212.75 L1338.8 212.75 L1335.3 216.75 Z" fill="#111"/><path d="M1359.5 209.5 L1370 209.5 L1373.5 213 L1373.5 221 L1363 221 L1359.5 217.5 Z M1359.5 209.5 L1363 213 L1373.5 213 M1363 213 L1363 221 M1364 207 L1370 223" fill="none" stroke="#777" stroke-width="1" /><path d="M1380.0 212.75 L1387.0 212.75 L1383.5 216.75 Z" fill="#111"/><rect x="1397" y="205.5" width="37.5" height="19" fill="#cde4f7" stroke="#a9cdee" stroke-width="1" rx="2" /><path d="M1416.7 207 L1416.7 223" fill="none" stroke="#a9cdee" stroke-width="1" /><path d="M1402 211 L1406 211 L1412 207 L1412 222 L1406 218 L1402 218 Z" fill="#3a8ad3" stroke="none" stroke-width="1" /><path d="M1420.5 212.75 L1427.5 212.75 L1424 216.75 Z" fill="#111"/><path d="M1441.5 210.5 L1452 210.5 L1455 213.5 L1455 221 L1444.5 221 L1441.5 218 Z M1441.5 210.5 L1444.5 213.5 L1455 213.5 M1444.5 213.5 L1444.5 221" fill="#dde8f5" stroke="#3a8ad3" stroke-width="1" /><path d="M1461.9 212.75 L1468.9 212.75 L1465.4 216.75 Z" fill="#111"/><rect x="1479.3" y="205.5" width="19.5" height="19" fill="#cde4f7" stroke="#a9cdee" stroke-width="1" rx="2" /><rect x="1502" y="205.5" width="19.5" height="19" fill="#cde4f7" stroke="#a9cdee" stroke-width="1" rx="2" /><rect x="1525.2" y="205.5" width="19.5" height="19" fill="#cde4f7" stroke="#a9cdee" stroke-width="1" rx="2" /><rect x="1482.5" y="208.5" width="13" height="12" fill="none" stroke="#3a8ad3" stroke-width="1.2" rx="0" /><rect x="1485.5" y="211" width="7" height="7" fill="none" stroke="#3a8ad3" stroke-width="1" rx="0" /><rect x="1505.5" y="208.5" width="13" height="12" fill="none" stroke="#777" stroke-width="1.2" rx="0" /><path d="M1512 218 L1512 211 M1512 218 L1508 215.5 M1512 218 L1516 216" fill="none" stroke="#3aa64a" stroke-width="1" /><rect x="1528.5" y="208.5" width="13" height="12" fill="none" stroke="#777" stroke-width="1.2" rx="0" /><path d="M1531.5 211 L1531.5 218.5 M1535 211 L1535 218.5 M1538.5 211 L1538.5 218.5 M1529 212.5 L1541 212.5 M1529 216 L1541 216" fill="none" stroke="#3a8ad3" stroke-width="1" /><path d="M1558 207.5 L1571 209.5 L1571 214 L1558 212 Z" fill="#c8c8c8" stroke="none" stroke-width="1" /><rect x="1558" y="212" width="14" height="4" fill="#3a8ad3" stroke="none" stroke-width="1" rx="0" /><circle cx="1566" cy="219.5" r="3.5" fill="#fff" stroke="#d8204a" stroke-width="1.3"/><path d="M1563.5 222 L1568.5 217" fill="none" stroke="#d8204a" stroke-width="1.2" /><circle cx="1589" cy="214.5" r="7.5" fill="#ddd" stroke="#888" stroke-width="1.2"/><circle cx="1586.5" cy="211" r="1.8" fill="#fff" stroke="#888" stroke-width="0.8"/><circle cx="1592" cy="217" r="1.2" fill="#e8703a" stroke="none" stroke-width="1"/><circle cx="1588" cy="219" r="1.2" fill="#d8204a" stroke="none" stroke-width="1"/><circle cx="1593" cy="212" r="1.2" fill="#3a8ad3" stroke="none" stroke-width="1"/><path d="M1602.0 212.75 L1609.0 212.75 L1605.5 216.75 Z" fill="#111"/><circle cx="1637" cy="214.5" r="6.5" fill="none" stroke="#3a8ad3" stroke-width="2.8"/><path d="M1633 209 L1639 217 M1641 210 L1634 219 M1630.5 214 L1643.5 215" fill="none" stroke="#f9fafe" stroke-width="1.3" /><path d="M1650.8 212.75 L1657.8 212.75 L1654.3 216.75 Z" fill="#111"/><rect x="1669.5" y="209.5" width="16" height="11" fill="#3a8ad3" stroke="none" stroke-width="1" rx="1.5" /><rect x="1673" y="207.5" width="6" height="3" fill="#3a8ad3" stroke="none" stroke-width="1" rx="0" /><circle cx="1677.7" cy="215" r="3.2" fill="#fff" stroke="none" stroke-width="1"/><circle cx="1677.7" cy="215" r="1.9" fill="#3a8ad3" stroke="none" stroke-width="1"/><rect x="1697" y="207.5" width="9" height="4" fill="none" stroke="#3a8ad3" stroke-width="1.3" rx="0" /><rect x="1694" y="211.5" width="15" height="7" fill="#fff" stroke="#3a8ad3" stroke-width="1.5" rx="1.5" /><rect x="1697" y="216.5" width="9" height="5" fill="#fff" stroke="#3a8ad3" stroke-width="1.3" rx="0" /><rect x="1894" y="237" width="12" height="10" fill="#1f3f8f" stroke="#fff" stroke-width="1.3" rx="2" /><rect x="1897" y="239.5" width="6" height="5" fill="#e6d24a" stroke="none" stroke-width="1" rx="0" /><path d="M786.2 917.7 L786.2 897" fill="none" stroke="#3d7fc4" stroke-width="1.8" /><path d="M786.2 890.5 L782.5 898.5 L790 898.5 Z" fill="#3d7fc4" stroke="none" stroke-width="1" /><path d="M786.2 917.7 L767 920.5" fill="none" stroke="#d81b5a" stroke-width="1.8" /><path d="M759.2 921.6 L767.5 917 L768 924.5 Z" fill="#d81b5a" stroke="none" stroke-width="1" /><path d="M786.2 917.7 L795 922.5" fill="none" stroke="#3aa64a" stroke-width="1.6" /><path d="M799.5 925.2 L793.5 926.5 L795.5 919.5 Z" fill="#3aa64a" stroke="none" stroke-width="1" /><path d="M823 981.5 L829 987.5 M829 981.5 L823 987.5" fill="none" stroke="#9a9a9a" stroke-width="1.1" /><path d="M1028 981.5 L1034 987.5 M1034 981.5 L1028 987.5" fill="none" stroke="#9a9a9a" stroke-width="1.1" /><path d="M753 1004 L757 1012" fill="none" stroke="#5a4a3a" stroke-width="1" /><path d="M755 1011 L760 1010 L761 1019 L756 1019 Z" fill="#e7a64a" stroke="none" stroke-width="1" /><rect x="774" y="1006.5" width="11" height="9" fill="#fff" stroke="#555" stroke-width="1" rx="0" /><rect x="777" y="1008.5" width="10" height="9" fill="#fff" stroke="#3a8ad3" stroke-width="1.2" rx="0" /><path d="M777 1008.5 L782 1013 L787 1008.5" fill="none" stroke="#3a8ad3" stroke-width="1" /></svg>
</body></html>
